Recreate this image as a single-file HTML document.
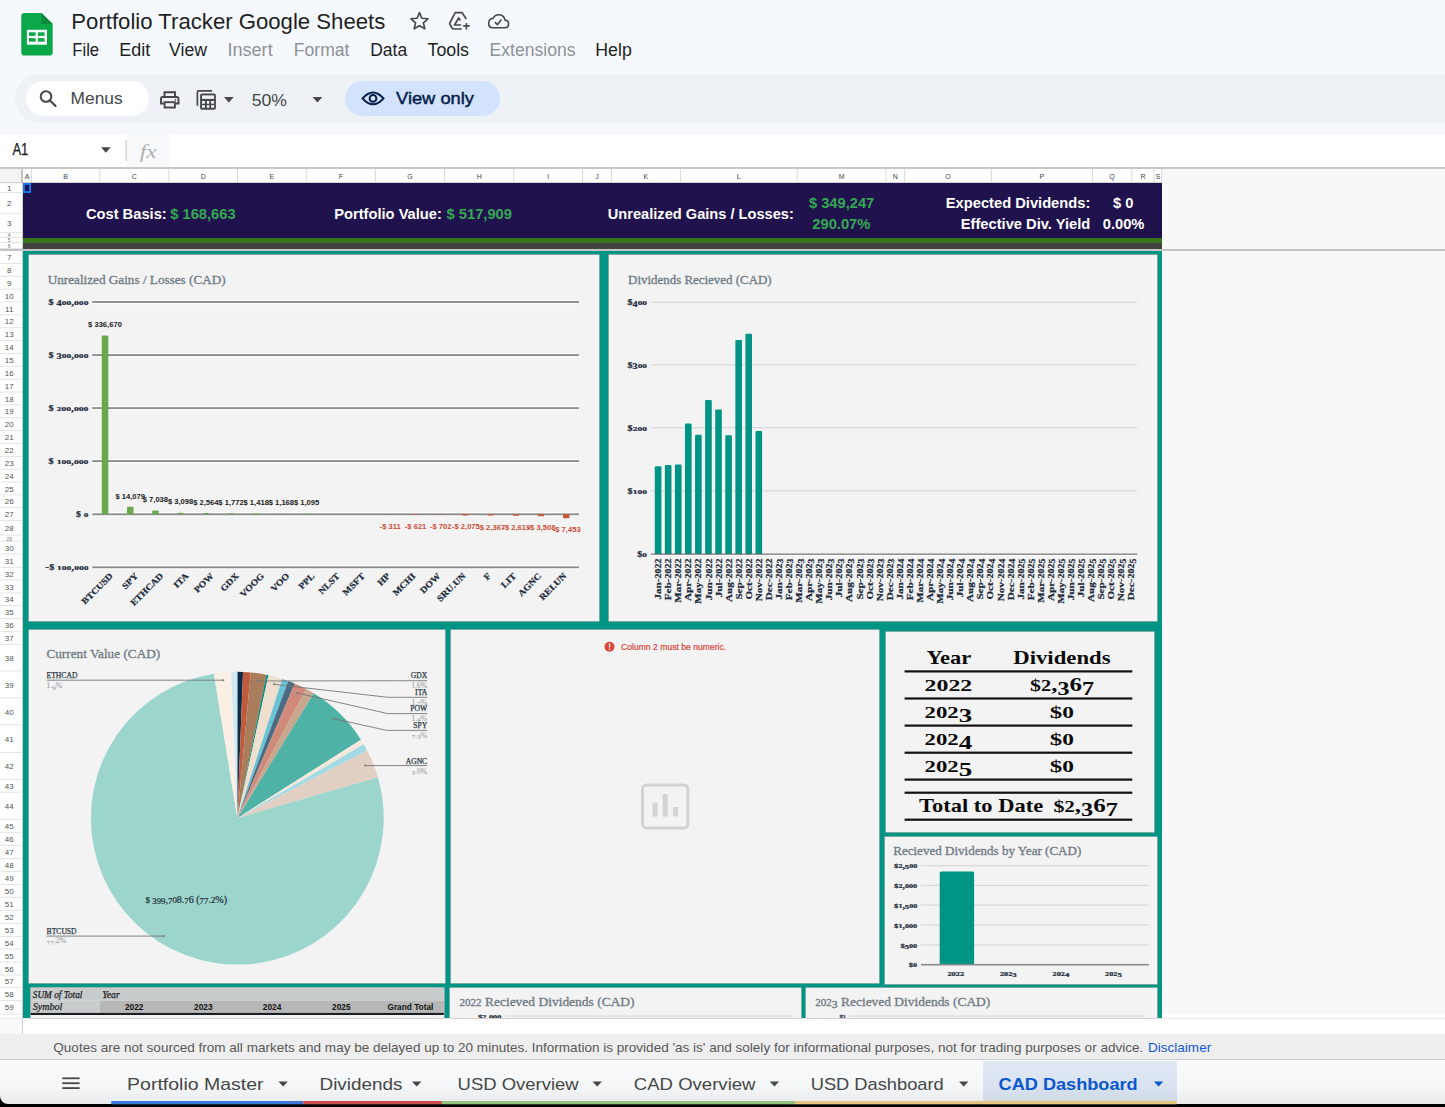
<!DOCTYPE html>
<html><head><meta charset="utf-8"><title>Portfolio Tracker Google Sheets</title>
<style>
html,body{margin:0;padding:0;}
body{width:1445px;height:1107px;overflow:hidden;position:relative;background:#f5f9fd;font-family:"Liberation Sans",sans-serif;}
.abs{position:absolute;}
svg{position:absolute;left:0;top:0;overflow:visible;}
</style></head><body>

<div class="abs" style="left:0;top:0;width:1445px;height:135px;background:#f5f9fd"></div>
<div class="abs" style="left:15px;top:73.5px;width:1500px;height:49.5px;background:#eef2f7;border-radius:25px"></div>
<div class="abs" style="left:25.6px;top:81px;width:123px;height:35px;background:#fff;border-radius:18px"></div>
<div class="abs" style="left:344.7px;top:81px;width:155.3px;height:35px;background:#d3e3fd;border-radius:18px"></div>
<div class="abs" style="left:0;top:135px;width:1445px;height:32.5px;background:#fff"></div>
<div class="abs" style="left:126.6px;top:135px;width:42.3px;height:32.3px;background:#f8f9fa"></div>
<div class="abs" style="left:0;top:167.3px;width:1445px;height:1.8px;background:#c7c7c7"></div>
<svg width="1445" height="170"><path d="M24.5 13 H41.5 L52.7 24 V52.5 Q52.7 55.6 49.6 55.6 H24.5 Q21.3 55.6 21.3 52.5 V16.2 Q21.3 13 24.5 13 Z" fill="#0ba84a"/><path d="M41.5 13 L52.7 24 H41.5 Z" fill="#0a8a3a"/><rect x="26.9" y="29.8" width="20.1" height="14.9" fill="#fff"/><rect x="29" y="32.3" width="6.6" height="3.6" fill="#0ba84a"/><rect x="37.8" y="32.3" width="6.8" height="3.6" fill="#0ba84a"/><rect x="29" y="38.1" width="6.6" height="3.6" fill="#0ba84a"/><rect x="37.8" y="38.1" width="6.8" height="3.6" fill="#0ba84a"/><text x="71.3" y="29.3" font-family='"Liberation Sans", sans-serif' font-size="22" fill="#1f1f1f" font-weight="normal" font-style="normal" text-anchor="start" textLength="314" lengthAdjust="spacingAndGlyphs" >Portfolio Tracker Google Sheets</text><path d="M419.5 12.6 L421.9 18.3 L428 18.8 L423.4 22.8 L424.8 28.8 L419.5 25.6 L414.2 28.8 L415.6 22.8 L411 18.8 L417.1 18.3 Z" fill="none" stroke="#444746" stroke-width="1.6" stroke-linejoin="round"/><path d="M466.3 19.1 L461.9 12.6 H455.2 L449.9 22.8 Q449.5 23.6 449.9 24.4 L452.2 28.2 Q452.6 29 453.5 29 H461.7" fill="none" stroke="#444746" stroke-width="1.7" stroke-linejoin="round"/><path d="M461.2 25 H454.6 L458.7 17.9 L460.3 20.5" fill="none" stroke="#444746" stroke-width="1.7" stroke-linejoin="round"/><path d="M466.4 22.9 V29.4 M463.2 25.9 H469.7" stroke="#444746" stroke-width="1.6"/><path d="M492.5 27.7 H504.8 Q508.6 27.7 508.6 23.9 Q508.6 20.4 505.1 20.1 Q503.8 14.8 498.8 14.8 Q494.8 14.8 493.1 18.3 Q488.7 18.8 488.7 23.2 Q488.7 27.7 492.5 27.7 Z" fill="none" stroke="#444746" stroke-width="1.6"/><path d="M494.8 22.1 L497.5 24.5 L501.4 19.6" fill="none" stroke="#444746" stroke-width="1.6"/><text x="72.2" y="56" font-family='"Liberation Sans", sans-serif' font-size="17.5" fill="#1f1f1f" font-weight="normal" font-style="normal" text-anchor="start" textLength="27" lengthAdjust="spacingAndGlyphs" >File</text><text x="119.3" y="56" font-family='"Liberation Sans", sans-serif' font-size="17.5" fill="#1f1f1f" font-weight="normal" font-style="normal" text-anchor="start" textLength="31" lengthAdjust="spacingAndGlyphs" >Edit</text><text x="169" y="56" font-family='"Liberation Sans", sans-serif' font-size="17.5" fill="#1f1f1f" font-weight="normal" font-style="normal" text-anchor="start" textLength="38" lengthAdjust="spacingAndGlyphs" >View</text><text x="227.4" y="56" font-family='"Liberation Sans", sans-serif' font-size="17.5" fill="#8e9196" font-weight="normal" font-style="normal" text-anchor="start" textLength="45.3" lengthAdjust="spacingAndGlyphs" >Insert</text><text x="293.8" y="56" font-family='"Liberation Sans", sans-serif' font-size="17.5" fill="#8e9196" font-weight="normal" font-style="normal" text-anchor="start" textLength="55.7" lengthAdjust="spacingAndGlyphs" >Format</text><text x="370.2" y="56" font-family='"Liberation Sans", sans-serif' font-size="17.5" fill="#1f1f1f" font-weight="normal" font-style="normal" text-anchor="start" textLength="37" lengthAdjust="spacingAndGlyphs" >Data</text><text x="427.5" y="56" font-family='"Liberation Sans", sans-serif' font-size="17.5" fill="#1f1f1f" font-weight="normal" font-style="normal" text-anchor="start" textLength="41.5" lengthAdjust="spacingAndGlyphs" >Tools</text><text x="489.5" y="56" font-family='"Liberation Sans", sans-serif' font-size="17.5" fill="#8e9196" font-weight="normal" font-style="normal" text-anchor="start" textLength="86" lengthAdjust="spacingAndGlyphs" >Extensions</text><text x="595.3" y="56" font-family='"Liberation Sans", sans-serif' font-size="17.5" fill="#1f1f1f" font-weight="normal" font-style="normal" text-anchor="start" textLength="36.5" lengthAdjust="spacingAndGlyphs" >Help</text><circle cx="46" cy="96.5" r="5.3" fill="none" stroke="#444746" stroke-width="2"/><path d="M49.8 100.3 L55.5 106" stroke="#444746" stroke-width="2.2" stroke-linecap="round"/><text x="70.6" y="104.3" font-family='"Liberation Sans", sans-serif' font-size="17" fill="#444746" font-weight="normal" font-style="normal" text-anchor="start" textLength="52" lengthAdjust="spacingAndGlyphs" >Menus</text><path d="M164.5 96.8 V92.2 H175 V96.8" fill="none" stroke="#444746" stroke-width="1.9"/><path d="M163.8 103.5 H161 V98.7 Q161 97 162.7 97 H176.8 Q178.5 97 178.5 98.7 V103.5 H175.8" fill="none" stroke="#444746" stroke-width="1.9"/><rect x="164.6" y="102.2" width="10.3" height="5.3" fill="none" stroke="#444746" stroke-width="1.9"/><circle cx="175.4" cy="99.8" r="0.9" fill="#444746"/><path d="M197.4 105.7 V92 Q197.4 90.8 198.6 90.8 H212" fill="none" stroke="#444746" stroke-width="1.7"/><rect x="200.1" y="93.5" width="15.8" height="16.2" rx="2" fill="#444746"/><rect x="202" y="95.4" width="12.1" height="3.5" fill="#eef2f7"/><rect x="202" y="101" width="2.9" height="2.7" fill="#eef2f7"/><rect x="202" y="105.1" width="2.9" height="2.7" fill="#eef2f7"/><rect x="206.8" y="101" width="2.5" height="2.7" fill="#eef2f7"/><rect x="206.8" y="105.1" width="2.5" height="2.7" fill="#eef2f7"/><rect x="211.1" y="101" width="3.0" height="2.7" fill="#eef2f7"/><rect x="211.1" y="105.1" width="3.0" height="2.7" fill="#eef2f7"/><path d="M224 97 H233.7 L228.85 102.5 Z" fill="#444746"/><text x="251.7" y="105.7" font-family='"Liberation Sans", sans-serif' font-size="17" fill="#444746" font-weight="normal" font-style="normal" text-anchor="start" textLength="35.3" lengthAdjust="spacingAndGlyphs" >50%</text><path d="M312.6 97 H322.3 L317.45 102.5 Z" fill="#444746"/><path d="M362.5 98.4 Q373 86.5 383.5 98.4 Q373 110.3 362.5 98.4 Z" fill="none" stroke="#041e49" stroke-width="2"/><circle cx="373" cy="98.4" r="3.4" fill="none" stroke="#041e49" stroke-width="2"/><text x="396" y="103.9" font-family='"Liberation Sans", sans-serif' font-size="17" fill="#041e49" font-weight="normal" font-style="normal" text-anchor="start" textLength="78" lengthAdjust="spacingAndGlyphs" stroke="#041e49" stroke-width="0.45">View only</text><text x="12.4" y="155.2" font-family='"Liberation Sans", sans-serif' font-size="15.8" fill="#1f1f1f" font-weight="normal" font-style="normal" text-anchor="start" textLength="16" lengthAdjust="spacingAndGlyphs" stroke="#1f1f1f" stroke-width="0.25">A1</text><path d="M101 147.2 H110.7 L105.85 152.7 Z" fill="#444746"/><rect x="125.5" y="140" width="1.2" height="21" fill="#c7c7c7"/><text x="139.8" y="157.5" font-family='"Liberation Serif", serif' font-size="19" fill="#b0b0b0" font-weight="normal" font-style="italic" text-anchor="start" textLength="17" lengthAdjust="spacingAndGlyphs" >fx</text></svg>
<div class="abs" style="left:0;top:169px;width:1445px;height:865px;background:#f8f8f8"></div>
<div class="abs" style="left:0;top:169px;width:1161.8px;height:14px;background:#fff"></div>
<div class="abs" style="left:0;top:169px;width:22px;height:14px;background:#f1f3f4"></div>
<div class="abs" style="left:0;top:183px;width:22px;height:851px;background:#fff"></div>
<div class="abs" style="left:23px;top:1014px;width:1422px;height:20px;background:#fff"></div>
<div class="abs" style="left:0;top:1018.5px;width:22px;height:15px;background:#f8f9fa"></div>
<svg width="1445" height="1107"><rect x="30.8" y="169" width="1" height="14" fill="#d9d9d9"/><rect x="99.3" y="169" width="1" height="14" fill="#d9d9d9"/><rect x="168.3" y="169" width="1" height="14" fill="#d9d9d9"/><rect x="237.0" y="169" width="1" height="14" fill="#d9d9d9"/><rect x="305.7" y="169" width="1" height="14" fill="#d9d9d9"/><rect x="374.9" y="169" width="1" height="14" fill="#d9d9d9"/><rect x="444.1" y="169" width="1" height="14" fill="#d9d9d9"/><rect x="513.2" y="169" width="1" height="14" fill="#d9d9d9"/><rect x="582.2" y="169" width="1" height="14" fill="#d9d9d9"/><rect x="610.9" y="169" width="1" height="14" fill="#d9d9d9"/><rect x="679.9" y="169" width="1" height="14" fill="#d9d9d9"/><rect x="796.7" y="169" width="1" height="14" fill="#d9d9d9"/><rect x="885.5" y="169" width="1" height="14" fill="#d9d9d9"/><rect x="904.2" y="169" width="1" height="14" fill="#d9d9d9"/><rect x="990.9" y="169" width="1" height="14" fill="#d9d9d9"/><rect x="1091.9" y="169" width="1" height="14" fill="#d9d9d9"/><rect x="1131.3" y="169" width="1" height="14" fill="#d9d9d9"/><rect x="1153.7" y="169" width="1" height="14" fill="#d9d9d9"/><rect x="1161.3" y="169" width="1" height="14" fill="#d9d9d9"/><rect x="0" y="182.3" width="1161.8" height="0.8" fill="#c0c0c0"/><text x="27.1" y="179.3" font-family='"Liberation Sans", sans-serif' font-size="7" fill="#444" font-weight="normal" font-style="normal" text-anchor="middle" >A</text><text x="65.5" y="179.3" font-family='"Liberation Sans", sans-serif' font-size="7" fill="#444" font-weight="normal" font-style="normal" text-anchor="middle" >B</text><text x="134.3" y="179.3" font-family='"Liberation Sans", sans-serif' font-size="7" fill="#444" font-weight="normal" font-style="normal" text-anchor="middle" >C</text><text x="203.2" y="179.3" font-family='"Liberation Sans", sans-serif' font-size="7" fill="#444" font-weight="normal" font-style="normal" text-anchor="middle" >D</text><text x="271.9" y="179.3" font-family='"Liberation Sans", sans-serif' font-size="7" fill="#444" font-weight="normal" font-style="normal" text-anchor="middle" >E</text><text x="340.8" y="179.3" font-family='"Liberation Sans", sans-serif' font-size="7" fill="#444" font-weight="normal" font-style="normal" text-anchor="middle" >F</text><text x="410.0" y="179.3" font-family='"Liberation Sans", sans-serif' font-size="7" fill="#444" font-weight="normal" font-style="normal" text-anchor="middle" >G</text><text x="479.2" y="179.3" font-family='"Liberation Sans", sans-serif' font-size="7" fill="#444" font-weight="normal" font-style="normal" text-anchor="middle" >H</text><text x="548.2" y="179.3" font-family='"Liberation Sans", sans-serif' font-size="7" fill="#444" font-weight="normal" font-style="normal" text-anchor="middle" >I</text><text x="597.0" y="179.3" font-family='"Liberation Sans", sans-serif' font-size="7" fill="#444" font-weight="normal" font-style="normal" text-anchor="middle" >J</text><text x="645.9" y="179.3" font-family='"Liberation Sans", sans-serif' font-size="7" fill="#444" font-weight="normal" font-style="normal" text-anchor="middle" >K</text><text x="738.8" y="179.3" font-family='"Liberation Sans", sans-serif' font-size="7" fill="#444" font-weight="normal" font-style="normal" text-anchor="middle" >L</text><text x="841.6" y="179.3" font-family='"Liberation Sans", sans-serif' font-size="7" fill="#444" font-weight="normal" font-style="normal" text-anchor="middle" >M</text><text x="895.4" y="179.3" font-family='"Liberation Sans", sans-serif' font-size="7" fill="#444" font-weight="normal" font-style="normal" text-anchor="middle" >N</text><text x="948.0" y="179.3" font-family='"Liberation Sans", sans-serif' font-size="7" fill="#444" font-weight="normal" font-style="normal" text-anchor="middle" >O</text><text x="1041.9" y="179.3" font-family='"Liberation Sans", sans-serif' font-size="7" fill="#444" font-weight="normal" font-style="normal" text-anchor="middle" >P</text><text x="1112.1" y="179.3" font-family='"Liberation Sans", sans-serif' font-size="7" fill="#444" font-weight="normal" font-style="normal" text-anchor="middle" >Q</text><text x="1143.0" y="179.3" font-family='"Liberation Sans", sans-serif' font-size="7" fill="#444" font-weight="normal" font-style="normal" text-anchor="middle" >R</text><text x="1158.0" y="179.3" font-family='"Liberation Sans", sans-serif' font-size="7" fill="#444" font-weight="normal" font-style="normal" text-anchor="middle" >S</text><rect x="21.2" y="169" width="1.8" height="14" fill="#bdbdbd"/><rect x="0" y="192.0" width="22" height="0.9" fill="#e0e0e0"/><text x="9.2" y="190.8" font-family='"Liberation Sans", sans-serif' font-size="8" fill="#555" font-weight="normal" font-style="normal" text-anchor="middle" >1</text><rect x="0" y="212.8" width="22" height="0.9" fill="#e0e0e0"/><text x="9.2" y="205.9" font-family='"Liberation Sans", sans-serif' font-size="8" fill="#555" font-weight="normal" font-style="normal" text-anchor="middle" >2</text><rect x="0" y="232.2" width="22" height="0.9" fill="#e0e0e0"/><text x="9.2" y="226.0" font-family='"Liberation Sans", sans-serif' font-size="8" fill="#555" font-weight="normal" font-style="normal" text-anchor="middle" >3</text><rect x="0" y="236.8" width="22" height="0.9" fill="#e0e0e0"/><text x="9.2" y="236.8" font-family='"Liberation Sans", sans-serif' font-size="5" fill="#777" font-weight="normal" font-style="normal" text-anchor="middle" >4</text><rect x="0" y="242.0" width="22" height="0.9" fill="#e0e0e0"/><text x="9.2" y="242.0" font-family='"Liberation Sans", sans-serif' font-size="5" fill="#777" font-weight="normal" font-style="normal" text-anchor="middle" >5</text><rect x="0" y="248.1" width="22" height="0.9" fill="#e0e0e0"/><text x="9.2" y="248.1" font-family='"Liberation Sans", sans-serif' font-size="5" fill="#777" font-weight="normal" font-style="normal" text-anchor="middle" >6</text><rect x="0" y="262.96" width="22" height="0.9" fill="#e0e0e0"/><text x="9.2" y="260.0" font-family='"Liberation Sans", sans-serif' font-size="8" fill="#555" font-weight="normal" font-style="normal" text-anchor="middle" >7</text><rect x="0" y="275.82" width="22" height="0.9" fill="#e0e0e0"/><text x="9.2" y="272.9" font-family='"Liberation Sans", sans-serif' font-size="8" fill="#555" font-weight="normal" font-style="normal" text-anchor="middle" >8</text><rect x="0" y="288.68" width="22" height="0.9" fill="#e0e0e0"/><text x="9.2" y="285.8" font-family='"Liberation Sans", sans-serif' font-size="8" fill="#555" font-weight="normal" font-style="normal" text-anchor="middle" >9</text><rect x="0" y="301.54" width="22" height="0.9" fill="#e0e0e0"/><text x="9.2" y="298.6" font-family='"Liberation Sans", sans-serif' font-size="8" fill="#555" font-weight="normal" font-style="normal" text-anchor="middle" >10</text><rect x="0" y="314.40000000000003" width="22" height="0.9" fill="#e0e0e0"/><text x="9.2" y="311.5" font-family='"Liberation Sans", sans-serif' font-size="8" fill="#555" font-weight="normal" font-style="normal" text-anchor="middle" >11</text><rect x="0" y="327.26000000000005" width="22" height="0.9" fill="#e0e0e0"/><text x="9.2" y="324.3" font-family='"Liberation Sans", sans-serif' font-size="8" fill="#555" font-weight="normal" font-style="normal" text-anchor="middle" >12</text><rect x="0" y="340.12000000000006" width="22" height="0.9" fill="#e0e0e0"/><text x="9.2" y="337.2" font-family='"Liberation Sans", sans-serif' font-size="8" fill="#555" font-weight="normal" font-style="normal" text-anchor="middle" >13</text><rect x="0" y="352.9800000000001" width="22" height="0.9" fill="#e0e0e0"/><text x="9.2" y="350.1" font-family='"Liberation Sans", sans-serif' font-size="8" fill="#555" font-weight="normal" font-style="normal" text-anchor="middle" >14</text><rect x="0" y="365.8400000000001" width="22" height="0.9" fill="#e0e0e0"/><text x="9.2" y="362.9" font-family='"Liberation Sans", sans-serif' font-size="8" fill="#555" font-weight="normal" font-style="normal" text-anchor="middle" >15</text><rect x="0" y="378.7000000000001" width="22" height="0.9" fill="#e0e0e0"/><text x="9.2" y="375.8" font-family='"Liberation Sans", sans-serif' font-size="8" fill="#555" font-weight="normal" font-style="normal" text-anchor="middle" >16</text><rect x="0" y="391.5600000000001" width="22" height="0.9" fill="#e0e0e0"/><text x="9.2" y="388.6" font-family='"Liberation Sans", sans-serif' font-size="8" fill="#555" font-weight="normal" font-style="normal" text-anchor="middle" >17</text><rect x="0" y="404.42000000000013" width="22" height="0.9" fill="#e0e0e0"/><text x="9.2" y="401.5" font-family='"Liberation Sans", sans-serif' font-size="8" fill="#555" font-weight="normal" font-style="normal" text-anchor="middle" >18</text><rect x="0" y="417.28000000000014" width="22" height="0.9" fill="#e0e0e0"/><text x="9.2" y="414.4" font-family='"Liberation Sans", sans-serif' font-size="8" fill="#555" font-weight="normal" font-style="normal" text-anchor="middle" >19</text><rect x="0" y="430.14000000000016" width="22" height="0.9" fill="#e0e0e0"/><text x="9.2" y="427.2" font-family='"Liberation Sans", sans-serif' font-size="8" fill="#555" font-weight="normal" font-style="normal" text-anchor="middle" >20</text><rect x="0" y="443.00000000000017" width="22" height="0.9" fill="#e0e0e0"/><text x="9.2" y="440.1" font-family='"Liberation Sans", sans-serif' font-size="8" fill="#555" font-weight="normal" font-style="normal" text-anchor="middle" >21</text><rect x="0" y="455.8600000000002" width="22" height="0.9" fill="#e0e0e0"/><text x="9.2" y="452.9" font-family='"Liberation Sans", sans-serif' font-size="8" fill="#555" font-weight="normal" font-style="normal" text-anchor="middle" >22</text><rect x="0" y="468.7200000000002" width="22" height="0.9" fill="#e0e0e0"/><text x="9.2" y="465.8" font-family='"Liberation Sans", sans-serif' font-size="8" fill="#555" font-weight="normal" font-style="normal" text-anchor="middle" >23</text><rect x="0" y="481.5800000000002" width="22" height="0.9" fill="#e0e0e0"/><text x="9.2" y="478.7" font-family='"Liberation Sans", sans-serif' font-size="8" fill="#555" font-weight="normal" font-style="normal" text-anchor="middle" >24</text><rect x="0" y="494.4400000000002" width="22" height="0.9" fill="#e0e0e0"/><text x="9.2" y="491.5" font-family='"Liberation Sans", sans-serif' font-size="8" fill="#555" font-weight="normal" font-style="normal" text-anchor="middle" >25</text><rect x="0" y="507.30000000000024" width="22" height="0.9" fill="#e0e0e0"/><text x="9.2" y="504.4" font-family='"Liberation Sans", sans-serif' font-size="8" fill="#555" font-weight="normal" font-style="normal" text-anchor="middle" >26</text><rect x="0" y="520.1600000000002" width="22" height="0.9" fill="#e0e0e0"/><text x="9.2" y="517.2" font-family='"Liberation Sans", sans-serif' font-size="8" fill="#555" font-weight="normal" font-style="normal" text-anchor="middle" >27</text><rect x="0" y="534.6" width="22" height="0.9" fill="#e0e0e0"/><text x="9.2" y="530.9" font-family='"Liberation Sans", sans-serif' font-size="8" fill="#555" font-weight="normal" font-style="normal" text-anchor="middle" >28</text><rect x="0" y="540.7" width="22" height="0.9" fill="#e0e0e0"/><text x="9.2" y="540.7" font-family='"Liberation Sans", sans-serif' font-size="5" fill="#777" font-weight="normal" font-style="normal" text-anchor="middle" >29</text><rect x="0" y="553.6" width="22" height="0.9" fill="#e0e0e0"/><text x="9.2" y="550.7" font-family='"Liberation Sans", sans-serif' font-size="8" fill="#555" font-weight="normal" font-style="normal" text-anchor="middle" >30</text><rect x="0" y="566.8" width="22" height="0.9" fill="#e0e0e0"/><text x="9.2" y="563.7" font-family='"Liberation Sans", sans-serif' font-size="8" fill="#555" font-weight="normal" font-style="normal" text-anchor="middle" >31</text><rect x="0" y="579.5" width="22" height="0.9" fill="#e0e0e0"/><text x="9.2" y="576.6" font-family='"Liberation Sans", sans-serif' font-size="8" fill="#555" font-weight="normal" font-style="normal" text-anchor="middle" >32</text><rect x="0" y="592.5" width="22" height="0.9" fill="#e0e0e0"/><text x="9.2" y="589.5" font-family='"Liberation Sans", sans-serif' font-size="8" fill="#555" font-weight="normal" font-style="normal" text-anchor="middle" >33</text><rect x="0" y="605.2" width="22" height="0.9" fill="#e0e0e0"/><text x="9.2" y="602.4" font-family='"Liberation Sans", sans-serif' font-size="8" fill="#555" font-weight="normal" font-style="normal" text-anchor="middle" >34</text><rect x="0" y="618.1" width="22" height="0.9" fill="#e0e0e0"/><text x="9.2" y="615.2" font-family='"Liberation Sans", sans-serif' font-size="8" fill="#555" font-weight="normal" font-style="normal" text-anchor="middle" >35</text><rect x="0" y="631.3" width="22" height="0.9" fill="#e0e0e0"/><text x="9.2" y="628.2" font-family='"Liberation Sans", sans-serif' font-size="8" fill="#555" font-weight="normal" font-style="normal" text-anchor="middle" >36</text><rect x="0" y="643.9" width="22" height="0.9" fill="#e0e0e0"/><text x="9.2" y="641.1" font-family='"Liberation Sans", sans-serif' font-size="8" fill="#555" font-weight="normal" font-style="normal" text-anchor="middle" >37</text><rect x="0" y="670.5" width="22" height="0.9" fill="#e0e0e0"/><text x="9.2" y="660.7" font-family='"Liberation Sans", sans-serif' font-size="8" fill="#555" font-weight="normal" font-style="normal" text-anchor="middle" >38</text><rect x="0" y="697.5" width="22" height="0.9" fill="#e0e0e0"/><text x="9.2" y="687.5" font-family='"Liberation Sans", sans-serif' font-size="8" fill="#555" font-weight="normal" font-style="normal" text-anchor="middle" >39</text><rect x="0" y="724.4" width="22" height="0.9" fill="#e0e0e0"/><text x="9.2" y="714.5" font-family='"Liberation Sans", sans-serif' font-size="8" fill="#555" font-weight="normal" font-style="normal" text-anchor="middle" >40</text><rect x="0" y="751.9" width="22" height="0.9" fill="#e0e0e0"/><text x="9.2" y="741.6" font-family='"Liberation Sans", sans-serif' font-size="8" fill="#555" font-weight="normal" font-style="normal" text-anchor="middle" >41</text><rect x="0" y="778.9" width="22" height="0.9" fill="#e0e0e0"/><text x="9.2" y="768.9" font-family='"Liberation Sans", sans-serif' font-size="8" fill="#555" font-weight="normal" font-style="normal" text-anchor="middle" >42</text><rect x="0" y="791.7" width="22" height="0.9" fill="#e0e0e0"/><text x="9.2" y="788.8" font-family='"Liberation Sans", sans-serif' font-size="8" fill="#555" font-weight="normal" font-style="normal" text-anchor="middle" >43</text><rect x="0" y="818.8" width="22" height="0.9" fill="#e0e0e0"/><text x="9.2" y="808.8" font-family='"Liberation Sans", sans-serif' font-size="8" fill="#555" font-weight="normal" font-style="normal" text-anchor="middle" >44</text><rect x="0" y="831.8" width="22" height="0.9" fill="#e0e0e0"/><text x="9.2" y="828.8" font-family='"Liberation Sans", sans-serif' font-size="8" fill="#555" font-weight="normal" font-style="normal" text-anchor="middle" >45</text><rect x="0" y="844.8" width="22" height="0.9" fill="#e0e0e0"/><text x="9.2" y="841.8" font-family='"Liberation Sans", sans-serif' font-size="8" fill="#555" font-weight="normal" font-style="normal" text-anchor="middle" >46</text><rect x="0" y="858.0" width="22" height="0.9" fill="#e0e0e0"/><text x="9.2" y="854.9" font-family='"Liberation Sans", sans-serif' font-size="8" fill="#555" font-weight="normal" font-style="normal" text-anchor="middle" >47</text><rect x="0" y="870.9" width="22" height="0.9" fill="#e0e0e0"/><text x="9.2" y="868.0" font-family='"Liberation Sans", sans-serif' font-size="8" fill="#555" font-weight="normal" font-style="normal" text-anchor="middle" >48</text><rect x="0" y="883.9" width="22" height="0.9" fill="#e0e0e0"/><text x="9.2" y="880.9" font-family='"Liberation Sans", sans-serif' font-size="8" fill="#555" font-weight="normal" font-style="normal" text-anchor="middle" >49</text><rect x="0" y="896.9" width="22" height="0.9" fill="#e0e0e0"/><text x="9.2" y="893.9" font-family='"Liberation Sans", sans-serif' font-size="8" fill="#555" font-weight="normal" font-style="normal" text-anchor="middle" >50</text><rect x="0" y="909.9" width="22" height="0.9" fill="#e0e0e0"/><text x="9.2" y="906.9" font-family='"Liberation Sans", sans-serif' font-size="8" fill="#555" font-weight="normal" font-style="normal" text-anchor="middle" >51</text><rect x="0" y="922.9" width="22" height="0.9" fill="#e0e0e0"/><text x="9.2" y="919.9" font-family='"Liberation Sans", sans-serif' font-size="8" fill="#555" font-weight="normal" font-style="normal" text-anchor="middle" >52</text><rect x="0" y="935.9" width="22" height="0.9" fill="#e0e0e0"/><text x="9.2" y="932.9" font-family='"Liberation Sans", sans-serif' font-size="8" fill="#555" font-weight="normal" font-style="normal" text-anchor="middle" >53</text><rect x="0" y="948.6" width="22" height="0.9" fill="#e0e0e0"/><text x="9.2" y="945.8" font-family='"Liberation Sans", sans-serif' font-size="8" fill="#555" font-weight="normal" font-style="normal" text-anchor="middle" >54</text><rect x="0" y="961.6" width="22" height="0.9" fill="#e0e0e0"/><text x="9.2" y="958.6" font-family='"Liberation Sans", sans-serif' font-size="8" fill="#555" font-weight="normal" font-style="normal" text-anchor="middle" >55</text><rect x="0" y="974.6" width="22" height="0.9" fill="#e0e0e0"/><text x="9.2" y="971.6" font-family='"Liberation Sans", sans-serif' font-size="8" fill="#555" font-weight="normal" font-style="normal" text-anchor="middle" >56</text><rect x="0" y="987.1" width="22" height="0.9" fill="#e0e0e0"/><text x="9.2" y="984.4" font-family='"Liberation Sans", sans-serif' font-size="8" fill="#555" font-weight="normal" font-style="normal" text-anchor="middle" >57</text><rect x="0" y="1000.2" width="22" height="0.9" fill="#e0e0e0"/><text x="9.2" y="997.2" font-family='"Liberation Sans", sans-serif' font-size="8" fill="#555" font-weight="normal" font-style="normal" text-anchor="middle" >58</text><rect x="0" y="1013.6" width="22" height="0.9" fill="#e0e0e0"/><text x="9.2" y="1010.4" font-family='"Liberation Sans", sans-serif' font-size="8" fill="#555" font-weight="normal" font-style="normal" text-anchor="middle" >59</text><rect x="22" y="183" width="1" height="851" fill="#d0d0d0"/><rect x="0" y="1017.8" width="1445" height="0.8" fill="#e0e0e0"/></svg>
<div class="abs" style="left:23px;top:183px;width:1138.8px;height:54.5px;background:#20124d"></div>
<div class="abs" style="left:23px;top:237.5px;width:1138.8px;height:5px;background:#38761d"></div>
<div class="abs" style="left:23px;top:242.5px;width:1138.8px;height:6.1px;background:#434343"></div>
<div class="abs" style="left:0;top:248.6px;width:1445px;height:2px;background:#c4c4c4"></div>
<div class="abs" style="left:23px;top:183px;width:8.3px;height:9.8px;box-sizing:border-box;border:2px solid #1a73e8"></div>
<svg width="1445" height="1107"><text x="85.9" y="218.7" font-family='"Liberation Sans", sans-serif' font-size="14.7" fill="#fff" font-weight="bold" font-style="normal" text-anchor="start" >Cost Basis: </text><text x="235.6" y="218.7" font-family='"Liberation Sans", sans-serif' font-size="14.7" fill="#34a853" font-weight="bold" font-style="normal" text-anchor="end" >$ 168,663</text><text x="334.2" y="218.7" font-family='"Liberation Sans", sans-serif' font-size="14.7" fill="#fff" font-weight="bold" font-style="normal" text-anchor="start" >Portfolio Value: </text><text x="511.9" y="218.7" font-family='"Liberation Sans", sans-serif' font-size="14.7" fill="#34a853" font-weight="bold" font-style="normal" text-anchor="end" >$ 517,909</text><text x="607.8" y="219.1" font-family='"Liberation Sans", sans-serif' font-size="14.7" fill="#fff" font-weight="bold" font-style="normal" text-anchor="start" textLength="186" lengthAdjust="spacingAndGlyphs" >Unrealized Gains / Losses:</text><text x="841.6" y="208.3" font-family='"Liberation Sans", sans-serif' font-size="14.7" fill="#34a853" font-weight="bold" font-style="normal" text-anchor="middle" >$ 349,247</text><text x="841.3" y="228.8" font-family='"Liberation Sans", sans-serif' font-size="14.7" fill="#34a853" font-weight="bold" font-style="normal" text-anchor="middle" >290.07%</text><text x="1090.3" y="208.3" font-family='"Liberation Sans", sans-serif' font-size="14.7" fill="#fff" font-weight="bold" font-style="normal" text-anchor="end" >Expected Dividends:</text><text x="1090.3" y="228.8" font-family='"Liberation Sans", sans-serif' font-size="14.7" fill="#fff" font-weight="bold" font-style="normal" text-anchor="end" >Effective Div. Yield</text><text x="1123.3" y="208.3" font-family='"Liberation Sans", sans-serif' font-size="14.7" fill="#fff" font-weight="bold" font-style="normal" text-anchor="middle" >$ 0</text><text x="1123.6" y="228.8" font-family='"Liberation Sans", sans-serif' font-size="14.7" fill="#fff" font-weight="bold" font-style="normal" text-anchor="middle" >0.00%</text></svg>
<div class="abs" style="left:23px;top:250.6px;width:1138.8px;height:767.4px;background:#009485"></div>
<div class="abs" style="left:28.5px;top:254.5px;width:570.0px;height:366.9px;background:#f3f3f3;box-shadow:0 0 0 0.6px #c9bcbc"></div>
<div class="abs" style="left:608.5px;top:254.5px;width:548.5px;height:366.9px;background:#f3f3f3;box-shadow:0 0 0 0.6px #c9bcbc"></div>
<div class="abs" style="left:28.5px;top:629.7px;width:416.5px;height:353.3px;background:#f3f3f3;box-shadow:0 0 0 0.6px #c9bcbc"></div>
<div class="abs" style="left:451.3px;top:629.7px;width:428.0px;height:353.3px;background:#f3f3f3;box-shadow:0 0 0 0.6px #c9bcbc"></div>
<div class="abs" style="left:885.6px;top:632.1px;width:268.8px;height:199.9px;background:#f3f3f3;box-shadow:0 0 0 0.6px #c9bcbc"></div>
<div class="abs" style="left:885px;top:837.2px;width:272.3px;height:146.8px;background:#f3f3f3;box-shadow:0 0 0 0.6px #c9bcbc"></div>
<div class="abs" style="left:30.7px;top:987.6px;width:413.2px;height:30.4px;background:#f3f3f3;box-shadow:0 0 0 0.6px #c9bcbc"></div>
<div class="abs" style="left:450.2px;top:988px;width:350.5px;height:30.0px;background:#f3f3f3;box-shadow:0 0 0 0.6px #c9bcbc"></div>
<div class="abs" style="left:805.5px;top:988px;width:351.8px;height:30.0px;background:#f3f3f3;box-shadow:0 0 0 0.6px #c9bcbc"></div>
<div class="abs" style="left:0;top:0;width:1445px;height:1018px;overflow:hidden"><svg width="1445" height="1107"><text x="47.7" y="284" font-family='"Liberation Serif", serif' font-size="12.9" fill="#6f7a84" font-weight="normal" font-style="normal" text-anchor="start" textLength="178" lengthAdjust="spacingAndGlyphs" stroke="#6f7a84" stroke-width="0.3">Unrealized Gains / Losses (CAD)</text><rect x="92.2" y="299.85" width="486.8" height="4.3" fill="#ffffff"/><rect x="92.2" y="301.05" width="486.8" height="1.9" fill="#8c8c8c"/><text x="88.4" y="305" font-family='"Liberation Serif", serif' font-size="8.5" fill="#1c2a3a" font-weight="bold" font-style="normal" text-anchor="end" textLength="39.8" lengthAdjust="spacingAndGlyphs" stroke="#1c2a3a" stroke-width="0.22"><tspan font-size="7.48">$</tspan> <tspan font-size="7.48" dy="1.36">4</tspan><tspan font-size="6.97" dy="-1.36">0</tspan><tspan font-size="6.97">0</tspan>,<tspan font-size="6.97">0</tspan><tspan font-size="6.97">0</tspan><tspan font-size="6.97">0</tspan></text><rect x="92.2" y="352.95000000000005" width="486.8" height="4.3" fill="#ffffff"/><rect x="92.2" y="354.15000000000003" width="486.8" height="1.9" fill="#8c8c8c"/><text x="88.4" y="358.1" font-family='"Liberation Serif", serif' font-size="8.5" fill="#1c2a3a" font-weight="bold" font-style="normal" text-anchor="end" textLength="39.8" lengthAdjust="spacingAndGlyphs" stroke="#1c2a3a" stroke-width="0.22"><tspan font-size="7.48">$</tspan> <tspan font-size="7.48" dy="1.36">3</tspan><tspan font-size="6.97" dy="-1.36">0</tspan><tspan font-size="6.97">0</tspan>,<tspan font-size="6.97">0</tspan><tspan font-size="6.97">0</tspan><tspan font-size="6.97">0</tspan></text><rect x="92.2" y="405.95000000000005" width="486.8" height="4.3" fill="#ffffff"/><rect x="92.2" y="407.15000000000003" width="486.8" height="1.9" fill="#8c8c8c"/><text x="88.4" y="411.1" font-family='"Liberation Serif", serif' font-size="8.5" fill="#1c2a3a" font-weight="bold" font-style="normal" text-anchor="end" textLength="39.8" lengthAdjust="spacingAndGlyphs" stroke="#1c2a3a" stroke-width="0.22"><tspan font-size="7.48">$</tspan> <tspan font-size="6.97">2</tspan><tspan font-size="6.97">0</tspan><tspan font-size="6.97">0</tspan>,<tspan font-size="6.97">0</tspan><tspan font-size="6.97">0</tspan><tspan font-size="6.97">0</tspan></text><rect x="92.2" y="458.95000000000005" width="486.8" height="4.3" fill="#ffffff"/><rect x="92.2" y="460.15000000000003" width="486.8" height="1.9" fill="#8c8c8c"/><text x="88.4" y="464.1" font-family='"Liberation Serif", serif' font-size="8.5" fill="#1c2a3a" font-weight="bold" font-style="normal" text-anchor="end" textLength="39.8" lengthAdjust="spacingAndGlyphs" stroke="#1c2a3a" stroke-width="0.22"><tspan font-size="7.48">$</tspan> <tspan font-size="6.97">1</tspan><tspan font-size="6.97">0</tspan><tspan font-size="6.97">0</tspan>,<tspan font-size="6.97">0</tspan><tspan font-size="6.97">0</tspan><tspan font-size="6.97">0</tspan></text><rect x="92.2" y="512.1499999999999" width="486.8" height="4.3" fill="#ffffff"/><rect x="92.2" y="513.3499999999999" width="486.8" height="1.9" fill="#8c8c8c"/><text x="88.4" y="517.3" font-family='"Liberation Serif", serif' font-size="8.5" fill="#1c2a3a" font-weight="bold" font-style="normal" text-anchor="end" textLength="12.4" lengthAdjust="spacingAndGlyphs" stroke="#1c2a3a" stroke-width="0.22"><tspan font-size="7.48">$</tspan> <tspan font-size="6.97">0</tspan></text><rect x="92.2" y="565.1499999999999" width="486.8" height="4.3" fill="#ffffff"/><rect x="92.2" y="566.3499999999999" width="486.8" height="1.9" fill="#8c8c8c"/><text x="88.4" y="570.3" font-family='"Liberation Serif", serif' font-size="8.5" fill="#1c2a3a" font-weight="bold" font-style="normal" text-anchor="end" textLength="43.1" lengthAdjust="spacingAndGlyphs" stroke="#1c2a3a" stroke-width="0.22">-<tspan font-size="7.48">$</tspan> <tspan font-size="6.97">1</tspan><tspan font-size="6.97">0</tspan><tspan font-size="6.97">0</tspan>,<tspan font-size="6.97">0</tspan><tspan font-size="6.97">0</tspan><tspan font-size="6.97">0</tspan></text><path d="M101.80 514.3 V336.53 Q101.80 335.53 102.80 335.53 H107.30 Q108.30 335.53 108.30 336.53 V514.3 Z" fill="#6aa84f"/><text x="105.0" y="327.2" font-family='"Liberation Sans", sans-serif' font-size="7.6" fill="#222" font-weight="bold" font-style="normal" text-anchor="middle" >$ 336,670</text><g transform="rotate(-45 113.4 576.5)"><text x="113.4" y="576.5" font-family='"Liberation Serif", serif' font-size="8.8" fill="#1c2a3a" font-weight="bold" font-style="normal" text-anchor="end" textLength="40.0" lengthAdjust="spacingAndGlyphs" stroke="#1c2a3a" stroke-width="0.22">BTCUSD</text></g><path d="M127.00 514.3 V507.82 Q127.00 506.82 128.00 506.82 H132.50 Q133.50 506.82 133.50 507.82 V514.3 Z" fill="#6aa84f"/><text x="130.2" y="498.5" font-family='"Liberation Sans", sans-serif' font-size="7.6" fill="#222" font-weight="bold" font-style="normal" text-anchor="middle" >$ 14,079</text><g transform="rotate(-45 138.6 576.5)"><text x="138.6" y="576.5" font-family='"Liberation Serif", serif' font-size="8.8" fill="#1c2a3a" font-weight="bold" font-style="normal" text-anchor="end" textLength="18.6" lengthAdjust="spacingAndGlyphs" stroke="#1c2a3a" stroke-width="0.22">SPY</text></g><path d="M152.20 514.3 V511.56 Q152.20 510.56 153.20 510.56 H157.70 Q158.70 510.56 158.70 511.56 V514.3 Z" fill="#6aa84f"/><text x="155.4" y="502.3" font-family='"Liberation Sans", sans-serif' font-size="7.6" fill="#222" font-weight="bold" font-style="normal" text-anchor="middle" >$ 7,038</text><g transform="rotate(-45 163.8 576.5)"><text x="163.8" y="576.5" font-family='"Liberation Serif", serif' font-size="8.8" fill="#1c2a3a" font-weight="bold" font-style="normal" text-anchor="end" textLength="42.2" lengthAdjust="spacingAndGlyphs" stroke="#1c2a3a" stroke-width="0.22">ETHCAD</text></g><path d="M177.40 514.3 V513.65 Q177.40 512.65 178.40 512.65 H182.90 Q183.90 512.65 183.90 513.65 V514.3 Z" fill="#6aa84f"/><text x="180.6" y="504.4" font-family='"Liberation Sans", sans-serif' font-size="7.6" fill="#222" font-weight="bold" font-style="normal" text-anchor="middle" >$ 3,098</text><g transform="rotate(-45 189.0 576.5)"><text x="189.0" y="576.5" font-family='"Liberation Serif", serif' font-size="8.8" fill="#1c2a3a" font-weight="bold" font-style="normal" text-anchor="end" textLength="16.8" lengthAdjust="spacingAndGlyphs" stroke="#1c2a3a" stroke-width="0.22">ITA</text></g><path d="M202.60 514.3 V513.94 Q202.60 512.94 203.60 512.94 H208.10 Q209.10 512.94 209.10 513.94 V514.3 Z" fill="#6aa84f"/><text x="205.8" y="504.6" font-family='"Liberation Sans", sans-serif' font-size="7.6" fill="#222" font-weight="bold" font-style="normal" text-anchor="middle" >$ 2,564</text><g transform="rotate(-45 214.2 576.5)"><text x="214.2" y="576.5" font-family='"Liberation Serif", serif' font-size="8.8" fill="#1c2a3a" font-weight="bold" font-style="normal" text-anchor="end" textLength="23.5" lengthAdjust="spacingAndGlyphs" stroke="#1c2a3a" stroke-width="0.22">POW</text></g><path d="M227.80 514.3 V514.36 Q227.80 513.36 228.80 513.36 H233.30 Q234.30 513.36 234.30 514.36 V514.3 Z" fill="#6aa84f"/><text x="231.0" y="505.1" font-family='"Liberation Sans", sans-serif' font-size="7.6" fill="#222" font-weight="bold" font-style="normal" text-anchor="middle" >$ 1,772</text><g transform="rotate(-45 239.4 576.5)"><text x="239.4" y="576.5" font-family='"Liberation Serif", serif' font-size="8.8" fill="#1c2a3a" font-weight="bold" font-style="normal" text-anchor="end" textLength="21.9" lengthAdjust="spacingAndGlyphs" stroke="#1c2a3a" stroke-width="0.22">GDX</text></g><path d="M253.00 514.3 V514.55 Q253.00 513.55 254.00 513.55 H258.50 Q259.50 513.55 259.50 514.55 V514.3 Z" fill="#6aa84f"/><text x="256.2" y="505.2" font-family='"Liberation Sans", sans-serif' font-size="7.6" fill="#222" font-weight="bold" font-style="normal" text-anchor="middle" >$ 1,418</text><g transform="rotate(-45 264.6 576.5)"><text x="264.6" y="576.5" font-family='"Liberation Serif", serif' font-size="8.8" fill="#1c2a3a" font-weight="bold" font-style="normal" text-anchor="end" textLength="29.9" lengthAdjust="spacingAndGlyphs" stroke="#1c2a3a" stroke-width="0.22">VOOG</text></g><path d="M278.20 514.3 V514.68 Q278.20 513.68 279.20 513.68 H283.70 Q284.70 513.68 284.70 514.68 V514.3 Z" fill="#6aa84f"/><text x="281.4" y="505.4" font-family='"Liberation Sans", sans-serif' font-size="7.6" fill="#222" font-weight="bold" font-style="normal" text-anchor="middle" >$ 1,168</text><g transform="rotate(-45 289.9 576.5)"><text x="289.9" y="576.5" font-family='"Liberation Serif", serif' font-size="8.8" fill="#1c2a3a" font-weight="bold" font-style="normal" text-anchor="end" textLength="22.3" lengthAdjust="spacingAndGlyphs" stroke="#1c2a3a" stroke-width="0.22">VOO</text></g><path d="M303.40 514.3 V514.72 Q303.40 513.72 304.40 513.72 H308.90 Q309.90 513.72 309.90 514.72 V514.3 Z" fill="#6aa84f"/><text x="306.6" y="505.4" font-family='"Liberation Sans", sans-serif' font-size="7.6" fill="#222" font-weight="bold" font-style="normal" text-anchor="middle" >$ 1,095</text><g transform="rotate(-45 315.1 576.5)"><text x="315.1" y="576.5" font-family='"Liberation Serif", serif' font-size="8.8" fill="#1c2a3a" font-weight="bold" font-style="normal" text-anchor="end" textLength="18.6" lengthAdjust="spacingAndGlyphs" stroke="#1c2a3a" stroke-width="0.22">PPL</text></g><path d="M328.60 514.3 V515.24 Q328.60 514.24 329.60 514.24 H334.10 Q335.10 514.24 335.10 515.24 V514.3 Z" fill="#6aa84f"/><g transform="rotate(-45 340.2 576.5)"><text x="340.2" y="576.5" font-family='"Liberation Serif", serif' font-size="8.8" fill="#1c2a3a" font-weight="bold" font-style="normal" text-anchor="end" textLength="25.7" lengthAdjust="spacingAndGlyphs" stroke="#1c2a3a" stroke-width="0.22">NLST</text></g><path d="M353.80 514.3 V515.27 Q353.80 514.27 354.80 514.27 H359.30 Q360.30 514.27 360.30 515.27 V514.3 Z" fill="#6aa84f"/><g transform="rotate(-45 365.5 576.5)"><text x="365.5" y="576.5" font-family='"Liberation Serif", serif' font-size="8.8" fill="#1c2a3a" font-weight="bold" font-style="normal" text-anchor="end" textLength="27.4" lengthAdjust="spacingAndGlyphs" stroke="#1c2a3a" stroke-width="0.22">MSFT</text></g><path d="M386.60 514.3 V513.47 Q386.60 514.47 387.60 514.47 H392.10 Q393.10 514.47 393.10 513.47 V514.3 Z" fill="#c9553c"/><text x="390.3" y="528.5" font-family='"Liberation Sans", sans-serif' font-size="7.6" fill="#cc4e35" font-weight="bold" font-style="normal" text-anchor="middle" >-$ 311</text><g transform="rotate(-45 390.6 576.5)"><text x="390.6" y="576.5" font-family='"Liberation Serif", serif' font-size="8.8" fill="#1c2a3a" font-weight="bold" font-style="normal" text-anchor="end" textLength="13.7" lengthAdjust="spacingAndGlyphs" stroke="#1c2a3a" stroke-width="0.22">HP</text></g><path d="M411.80 514.3 V513.63 Q411.80 514.63 412.80 514.63 H417.30 Q418.30 514.63 418.30 513.63 V514.3 Z" fill="#c9553c"/><text x="415.6" y="528.6" font-family='"Liberation Sans", sans-serif' font-size="7.6" fill="#cc4e35" font-weight="bold" font-style="normal" text-anchor="middle" >-$ 621</text><g transform="rotate(-45 415.9 576.5)"><text x="415.9" y="576.5" font-family='"Liberation Serif", serif' font-size="8.8" fill="#1c2a3a" font-weight="bold" font-style="normal" text-anchor="end" textLength="27.9" lengthAdjust="spacingAndGlyphs" stroke="#1c2a3a" stroke-width="0.22">MCHI</text></g><path d="M437.00 514.3 V513.67 Q437.00 514.67 438.00 514.67 H442.50 Q443.50 514.67 443.50 513.67 V514.3 Z" fill="#c9553c"/><text x="440.7" y="528.7" font-family='"Liberation Sans", sans-serif' font-size="7.6" fill="#cc4e35" font-weight="bold" font-style="normal" text-anchor="middle" >-$ 702</text><g transform="rotate(-45 441.0 576.5)"><text x="441.0" y="576.5" font-family='"Liberation Serif", serif' font-size="8.8" fill="#1c2a3a" font-weight="bold" font-style="normal" text-anchor="end" textLength="24.6" lengthAdjust="spacingAndGlyphs" stroke="#1c2a3a" stroke-width="0.22">DOW</text></g><path d="M462.20 514.3 V514.40 Q462.20 515.40 463.20 515.40 H467.70 Q468.70 515.40 468.70 514.40 V514.3 Z" fill="#c9553c"/><text x="465.9" y="529.4" font-family='"Liberation Sans", sans-serif' font-size="7.6" fill="#cc4e35" font-weight="bold" font-style="normal" text-anchor="middle" >-$ 2,075</text><g transform="rotate(-45 466.2 576.5)"><text x="466.2" y="576.5" font-family='"Liberation Serif", serif' font-size="8.8" fill="#1c2a3a" font-weight="bold" font-style="normal" text-anchor="end" textLength="36.4" lengthAdjust="spacingAndGlyphs" stroke="#1c2a3a" stroke-width="0.22">SRU.UN</text></g><path d="M487.40 514.3 V514.56 Q487.40 515.56 488.40 515.56 H492.90 Q493.90 515.56 493.90 514.56 V514.3 Z" fill="#c9553c"/><text x="491.2" y="529.6" font-family='"Liberation Sans", sans-serif' font-size="7.6" fill="#cc4e35" font-weight="bold" font-style="normal" text-anchor="middle" >-$ 2,367</text><g transform="rotate(-45 491.5 576.5)"><text x="491.5" y="576.5" font-family='"Liberation Serif", serif' font-size="8.8" fill="#1c2a3a" font-weight="bold" font-style="normal" text-anchor="end" textLength="6.0" lengthAdjust="spacingAndGlyphs" stroke="#1c2a3a" stroke-width="0.22">F</text></g><path d="M512.60 514.3 V514.69 Q512.60 515.69 513.60 515.69 H518.10 Q519.10 515.69 519.10 514.69 V514.3 Z" fill="#c9553c"/><text x="516.3" y="529.7" font-family='"Liberation Sans", sans-serif' font-size="7.6" fill="#cc4e35" font-weight="bold" font-style="normal" text-anchor="middle" >-$ 2,619</text><g transform="rotate(-45 516.6 576.5)"><text x="516.6" y="576.5" font-family='"Liberation Serif", serif' font-size="8.8" fill="#1c2a3a" font-weight="bold" font-style="normal" text-anchor="end" textLength="17.0" lengthAdjust="spacingAndGlyphs" stroke="#1c2a3a" stroke-width="0.22">LIT</text></g><path d="M537.80 514.3 V515.16 Q537.80 516.16 538.80 516.16 H543.30 Q544.30 516.16 544.30 515.16 V514.3 Z" fill="#c9553c"/><text x="541.5" y="530.2" font-family='"Liberation Sans", sans-serif' font-size="7.6" fill="#cc4e35" font-weight="bold" font-style="normal" text-anchor="middle" >-$ 3,508</text><g transform="rotate(-45 541.9 576.5)"><text x="541.9" y="576.5" font-family='"Liberation Serif", serif' font-size="8.8" fill="#1c2a3a" font-weight="bold" font-style="normal" text-anchor="end" textLength="29.0" lengthAdjust="spacingAndGlyphs" stroke="#1c2a3a" stroke-width="0.22">AGNC</text></g><path d="M563.00 514.3 V517.26 Q563.00 518.26 564.00 518.26 H568.50 Q569.50 518.26 569.50 517.26 V514.3 Z" fill="#c9553c"/><text x="566.7" y="532.3" font-family='"Liberation Sans", sans-serif' font-size="7.6" fill="#cc4e35" font-weight="bold" font-style="normal" text-anchor="middle" >-$ 7,453</text><g transform="rotate(-45 567.0 576.5)"><text x="567.0" y="576.5" font-family='"Liberation Serif", serif' font-size="8.8" fill="#1c2a3a" font-weight="bold" font-style="normal" text-anchor="end" textLength="34.2" lengthAdjust="spacingAndGlyphs" stroke="#1c2a3a" stroke-width="0.22">REI.UN</text></g><text x="628.1" y="284.2" font-family='"Liberation Serif", serif' font-size="12.9" fill="#6f7a84" font-weight="normal" font-style="normal" text-anchor="start" textLength="143.5" lengthAdjust="spacingAndGlyphs" stroke="#6f7a84" stroke-width="0.3">Dividends Recieved (CAD)</text><rect x="650.9" y="301.7" width="486.4" height="1.2" fill="#d9d9d9"/><text x="647" y="305.2" font-family='"Liberation Serif", serif' font-size="8.3" fill="#1c2a3a" font-weight="bold" font-style="normal" text-anchor="end" textLength="19.4" lengthAdjust="spacingAndGlyphs" stroke="#1c2a3a" stroke-width="0.22"><tspan font-size="7.3">$</tspan><tspan font-size="7.3" dy="1.33">4</tspan><tspan font-size="6.81" dy="-1.33">0</tspan><tspan font-size="6.81">0</tspan></text><rect x="650.9" y="364.2" width="486.4" height="1.2" fill="#d9d9d9"/><text x="647" y="367.7" font-family='"Liberation Serif", serif' font-size="8.3" fill="#1c2a3a" font-weight="bold" font-style="normal" text-anchor="end" textLength="19.4" lengthAdjust="spacingAndGlyphs" stroke="#1c2a3a" stroke-width="0.22"><tspan font-size="7.3">$</tspan><tspan font-size="7.3" dy="1.33">3</tspan><tspan font-size="6.81" dy="-1.33">0</tspan><tspan font-size="6.81">0</tspan></text><rect x="650.9" y="427.09999999999997" width="486.4" height="1.2" fill="#d9d9d9"/><text x="647" y="430.59999999999997" font-family='"Liberation Serif", serif' font-size="8.3" fill="#1c2a3a" font-weight="bold" font-style="normal" text-anchor="end" textLength="19.4" lengthAdjust="spacingAndGlyphs" stroke="#1c2a3a" stroke-width="0.22"><tspan font-size="7.3">$</tspan><tspan font-size="6.81">2</tspan><tspan font-size="6.81">0</tspan><tspan font-size="6.81">0</tspan></text><rect x="650.9" y="490.2" width="486.4" height="1.2" fill="#d9d9d9"/><text x="647" y="493.7" font-family='"Liberation Serif", serif' font-size="8.3" fill="#1c2a3a" font-weight="bold" font-style="normal" text-anchor="end" textLength="19.4" lengthAdjust="spacingAndGlyphs" stroke="#1c2a3a" stroke-width="0.22"><tspan font-size="7.3">$</tspan><tspan font-size="6.81">1</tspan><tspan font-size="6.81">0</tspan><tspan font-size="6.81">0</tspan></text><text x="647" y="556.9" font-family='"Liberation Serif", serif' font-size="8.3" fill="#1c2a3a" font-weight="bold" font-style="normal" text-anchor="end" textLength="9.7" lengthAdjust="spacingAndGlyphs" stroke="#1c2a3a" stroke-width="0.22"><tspan font-size="7.3">$</tspan><tspan font-size="6.81">0</tspan></text><path d="M654.80 554 V467.29 Q654.80 466.29 655.80 466.29 H660.40 Q661.40 466.29 661.40 467.29 V554 Z" fill="#009485"/><g transform="rotate(-90 661.2 558.6)"><text x="661.2" y="558.6" font-family='"Liberation Serif", serif' font-size="8.3" fill="#1c2a3a" font-weight="bold" font-style="normal" text-anchor="end" textLength="41.0" lengthAdjust="spacingAndGlyphs" stroke="#1c2a3a" stroke-width="0.22">Jan-<tspan font-size="7.47">2</tspan><tspan font-size="7.47">0</tspan><tspan font-size="7.47">2</tspan><tspan font-size="7.47">2</tspan></text></g><path d="M664.87 554 V466.03 Q664.87 465.03 665.87 465.03 H670.47 Q671.47 465.03 671.47 466.03 V554 Z" fill="#009485"/><g transform="rotate(-90 671.3 558.6)"><text x="671.3" y="558.6" font-family='"Liberation Serif", serif' font-size="8.3" fill="#1c2a3a" font-weight="bold" font-style="normal" text-anchor="end" textLength="41.6" lengthAdjust="spacingAndGlyphs" stroke="#1c2a3a" stroke-width="0.22">Feb-<tspan font-size="7.47">2</tspan><tspan font-size="7.47">0</tspan><tspan font-size="7.47">2</tspan><tspan font-size="7.47">2</tspan></text></g><path d="M674.94 554 V465.40 Q674.94 464.40 675.94 464.40 H680.54 Q681.54 464.40 681.54 465.40 V554 Z" fill="#009485"/><g transform="rotate(-90 681.3 558.6)"><text x="681.3" y="558.6" font-family='"Liberation Serif", serif' font-size="8.3" fill="#1c2a3a" font-weight="bold" font-style="normal" text-anchor="end" textLength="44.1" lengthAdjust="spacingAndGlyphs" stroke="#1c2a3a" stroke-width="0.22">Mar-<tspan font-size="7.47">2</tspan><tspan font-size="7.47">0</tspan><tspan font-size="7.47">2</tspan><tspan font-size="7.47">2</tspan></text></g><path d="M685.01 554 V424.38 Q685.01 423.38 686.01 423.38 H690.61 Q691.61 423.38 691.61 424.38 V554 Z" fill="#009485"/><g transform="rotate(-90 691.4 558.6)"><text x="691.4" y="558.6" font-family='"Liberation Serif", serif' font-size="8.3" fill="#1c2a3a" font-weight="bold" font-style="normal" text-anchor="end" textLength="42.4" lengthAdjust="spacingAndGlyphs" stroke="#1c2a3a" stroke-width="0.22">Apr-<tspan font-size="7.47">2</tspan><tspan font-size="7.47">0</tspan><tspan font-size="7.47">2</tspan><tspan font-size="7.47">2</tspan></text></g><path d="M695.08 554 V435.74 Q695.08 434.74 696.08 434.74 H700.68 Q701.68 434.74 701.68 435.74 V554 Z" fill="#009485"/><g transform="rotate(-90 701.5 558.6)"><text x="701.5" y="558.6" font-family='"Liberation Serif", serif' font-size="8.3" fill="#1c2a3a" font-weight="bold" font-style="normal" text-anchor="end" textLength="45.1" lengthAdjust="spacingAndGlyphs" stroke="#1c2a3a" stroke-width="0.22">May-<tspan font-size="7.47">2</tspan><tspan font-size="7.47">0</tspan><tspan font-size="7.47">2</tspan><tspan font-size="7.47">2</tspan></text></g><path d="M705.15 554 V401.04 Q705.15 400.04 706.15 400.04 H710.75 Q711.75 400.04 711.75 401.04 V554 Z" fill="#009485"/><g transform="rotate(-90 711.6 558.6)"><text x="711.6" y="558.6" font-family='"Liberation Serif", serif' font-size="8.3" fill="#1c2a3a" font-weight="bold" font-style="normal" text-anchor="end" textLength="41.6" lengthAdjust="spacingAndGlyphs" stroke="#1c2a3a" stroke-width="0.22">Jun-<tspan font-size="7.47">2</tspan><tspan font-size="7.47">0</tspan><tspan font-size="7.47">2</tspan><tspan font-size="7.47">2</tspan></text></g><path d="M715.22 554 V410.50 Q715.22 409.50 716.22 409.50 H720.82 Q721.82 409.50 721.82 410.50 V554 Z" fill="#009485"/><g transform="rotate(-90 721.6 558.6)"><text x="721.6" y="558.6" font-family='"Liberation Serif", serif' font-size="8.3" fill="#1c2a3a" font-weight="bold" font-style="normal" text-anchor="end" textLength="38.7" lengthAdjust="spacingAndGlyphs" stroke="#1c2a3a" stroke-width="0.22">Jul-<tspan font-size="7.47">2</tspan><tspan font-size="7.47">0</tspan><tspan font-size="7.47">2</tspan><tspan font-size="7.47">2</tspan></text></g><path d="M725.29 554 V436.37 Q725.29 435.37 726.29 435.37 H730.89 Q731.89 435.37 731.89 436.37 V554 Z" fill="#009485"/><g transform="rotate(-90 731.7 558.6)"><text x="731.7" y="558.6" font-family='"Liberation Serif", serif' font-size="8.3" fill="#1c2a3a" font-weight="bold" font-style="normal" text-anchor="end" textLength="43.3" lengthAdjust="spacingAndGlyphs" stroke="#1c2a3a" stroke-width="0.22">Aug-<tspan font-size="7.47">2</tspan><tspan font-size="7.47">0</tspan><tspan font-size="7.47">2</tspan><tspan font-size="7.47">2</tspan></text></g><path d="M735.36 554 V341.09 Q735.36 340.09 736.36 340.09 H740.96 Q741.96 340.09 741.96 341.09 V554 Z" fill="#009485"/><g transform="rotate(-90 741.8 558.6)"><text x="741.8" y="558.6" font-family='"Liberation Serif", serif' font-size="8.3" fill="#1c2a3a" font-weight="bold" font-style="normal" text-anchor="end" textLength="41.0" lengthAdjust="spacingAndGlyphs" stroke="#1c2a3a" stroke-width="0.22">Sep-<tspan font-size="7.47">2</tspan><tspan font-size="7.47">0</tspan><tspan font-size="7.47">2</tspan><tspan font-size="7.47">2</tspan></text></g><path d="M745.43 554 V334.78 Q745.43 333.78 746.43 333.78 H751.03 Q752.03 333.78 752.03 334.78 V554 Z" fill="#009485"/><g transform="rotate(-90 751.8 558.6)"><text x="751.8" y="558.6" font-family='"Liberation Serif", serif' font-size="8.3" fill="#1c2a3a" font-weight="bold" font-style="normal" text-anchor="end" textLength="41.0" lengthAdjust="spacingAndGlyphs" stroke="#1c2a3a" stroke-width="0.22">Oct-<tspan font-size="7.47">2</tspan><tspan font-size="7.47">0</tspan><tspan font-size="7.47">2</tspan><tspan font-size="7.47">2</tspan></text></g><path d="M755.50 554 V431.95 Q755.50 430.95 756.50 430.95 H761.10 Q762.10 430.95 762.10 431.95 V554 Z" fill="#009485"/><g transform="rotate(-90 761.9 558.6)"><text x="761.9" y="558.6" font-family='"Liberation Serif", serif' font-size="8.3" fill="#1c2a3a" font-weight="bold" font-style="normal" text-anchor="end" textLength="42.7" lengthAdjust="spacingAndGlyphs" stroke="#1c2a3a" stroke-width="0.22">Nov-<tspan font-size="7.47">2</tspan><tspan font-size="7.47">0</tspan><tspan font-size="7.47">2</tspan><tspan font-size="7.47">2</tspan></text></g><g transform="rotate(-90 772.0 558.6)"><text x="772.0" y="558.6" font-family='"Liberation Serif", serif' font-size="8.3" fill="#1c2a3a" font-weight="bold" font-style="normal" text-anchor="end" textLength="41.6" lengthAdjust="spacingAndGlyphs" stroke="#1c2a3a" stroke-width="0.22">Dec-<tspan font-size="7.47">2</tspan><tspan font-size="7.47">0</tspan><tspan font-size="7.47">2</tspan><tspan font-size="7.47">2</tspan></text></g><g transform="rotate(-90 782.0 558.6)"><text x="782.0" y="558.6" font-family='"Liberation Serif", serif' font-size="8.3" fill="#1c2a3a" font-weight="bold" font-style="normal" text-anchor="end" textLength="41.0" lengthAdjust="spacingAndGlyphs" stroke="#1c2a3a" stroke-width="0.22">Jan-<tspan font-size="7.47">2</tspan><tspan font-size="7.47">0</tspan><tspan font-size="7.47">2</tspan><tspan font-size="7.3" dy="1.33">3</tspan></text></g><g transform="rotate(-90 792.1 558.6)"><text x="792.1" y="558.6" font-family='"Liberation Serif", serif' font-size="8.3" fill="#1c2a3a" font-weight="bold" font-style="normal" text-anchor="end" textLength="41.6" lengthAdjust="spacingAndGlyphs" stroke="#1c2a3a" stroke-width="0.22">Feb-<tspan font-size="7.47">2</tspan><tspan font-size="7.47">0</tspan><tspan font-size="7.47">2</tspan><tspan font-size="7.3" dy="1.33">3</tspan></text></g><g transform="rotate(-90 802.2 558.6)"><text x="802.2" y="558.6" font-family='"Liberation Serif", serif' font-size="8.3" fill="#1c2a3a" font-weight="bold" font-style="normal" text-anchor="end" textLength="44.1" lengthAdjust="spacingAndGlyphs" stroke="#1c2a3a" stroke-width="0.22">Mar-<tspan font-size="7.47">2</tspan><tspan font-size="7.47">0</tspan><tspan font-size="7.47">2</tspan><tspan font-size="7.3" dy="1.33">3</tspan></text></g><g transform="rotate(-90 812.3 558.6)"><text x="812.3" y="558.6" font-family='"Liberation Serif", serif' font-size="8.3" fill="#1c2a3a" font-weight="bold" font-style="normal" text-anchor="end" textLength="42.4" lengthAdjust="spacingAndGlyphs" stroke="#1c2a3a" stroke-width="0.22">Apr-<tspan font-size="7.47">2</tspan><tspan font-size="7.47">0</tspan><tspan font-size="7.47">2</tspan><tspan font-size="7.3" dy="1.33">3</tspan></text></g><g transform="rotate(-90 822.3 558.6)"><text x="822.3" y="558.6" font-family='"Liberation Serif", serif' font-size="8.3" fill="#1c2a3a" font-weight="bold" font-style="normal" text-anchor="end" textLength="45.1" lengthAdjust="spacingAndGlyphs" stroke="#1c2a3a" stroke-width="0.22">May-<tspan font-size="7.47">2</tspan><tspan font-size="7.47">0</tspan><tspan font-size="7.47">2</tspan><tspan font-size="7.3" dy="1.33">3</tspan></text></g><g transform="rotate(-90 832.4 558.6)"><text x="832.4" y="558.6" font-family='"Liberation Serif", serif' font-size="8.3" fill="#1c2a3a" font-weight="bold" font-style="normal" text-anchor="end" textLength="41.6" lengthAdjust="spacingAndGlyphs" stroke="#1c2a3a" stroke-width="0.22">Jun-<tspan font-size="7.47">2</tspan><tspan font-size="7.47">0</tspan><tspan font-size="7.47">2</tspan><tspan font-size="7.3" dy="1.33">3</tspan></text></g><g transform="rotate(-90 842.5 558.6)"><text x="842.5" y="558.6" font-family='"Liberation Serif", serif' font-size="8.3" fill="#1c2a3a" font-weight="bold" font-style="normal" text-anchor="end" textLength="38.7" lengthAdjust="spacingAndGlyphs" stroke="#1c2a3a" stroke-width="0.22">Jul-<tspan font-size="7.47">2</tspan><tspan font-size="7.47">0</tspan><tspan font-size="7.47">2</tspan><tspan font-size="7.3" dy="1.33">3</tspan></text></g><g transform="rotate(-90 852.5 558.6)"><text x="852.5" y="558.6" font-family='"Liberation Serif", serif' font-size="8.3" fill="#1c2a3a" font-weight="bold" font-style="normal" text-anchor="end" textLength="43.3" lengthAdjust="spacingAndGlyphs" stroke="#1c2a3a" stroke-width="0.22">Aug-<tspan font-size="7.47">2</tspan><tspan font-size="7.47">0</tspan><tspan font-size="7.47">2</tspan><tspan font-size="7.3" dy="1.33">3</tspan></text></g><g transform="rotate(-90 862.6 558.6)"><text x="862.6" y="558.6" font-family='"Liberation Serif", serif' font-size="8.3" fill="#1c2a3a" font-weight="bold" font-style="normal" text-anchor="end" textLength="41.0" lengthAdjust="spacingAndGlyphs" stroke="#1c2a3a" stroke-width="0.22">Sep-<tspan font-size="7.47">2</tspan><tspan font-size="7.47">0</tspan><tspan font-size="7.47">2</tspan><tspan font-size="7.3" dy="1.33">3</tspan></text></g><g transform="rotate(-90 872.7 558.6)"><text x="872.7" y="558.6" font-family='"Liberation Serif", serif' font-size="8.3" fill="#1c2a3a" font-weight="bold" font-style="normal" text-anchor="end" textLength="41.0" lengthAdjust="spacingAndGlyphs" stroke="#1c2a3a" stroke-width="0.22">Oct-<tspan font-size="7.47">2</tspan><tspan font-size="7.47">0</tspan><tspan font-size="7.47">2</tspan><tspan font-size="7.3" dy="1.33">3</tspan></text></g><g transform="rotate(-90 882.7 558.6)"><text x="882.7" y="558.6" font-family='"Liberation Serif", serif' font-size="8.3" fill="#1c2a3a" font-weight="bold" font-style="normal" text-anchor="end" textLength="42.7" lengthAdjust="spacingAndGlyphs" stroke="#1c2a3a" stroke-width="0.22">Nov-<tspan font-size="7.47">2</tspan><tspan font-size="7.47">0</tspan><tspan font-size="7.47">2</tspan><tspan font-size="7.3" dy="1.33">3</tspan></text></g><g transform="rotate(-90 892.8 558.6)"><text x="892.8" y="558.6" font-family='"Liberation Serif", serif' font-size="8.3" fill="#1c2a3a" font-weight="bold" font-style="normal" text-anchor="end" textLength="41.6" lengthAdjust="spacingAndGlyphs" stroke="#1c2a3a" stroke-width="0.22">Dec-<tspan font-size="7.47">2</tspan><tspan font-size="7.47">0</tspan><tspan font-size="7.47">2</tspan><tspan font-size="7.3" dy="1.33">3</tspan></text></g><g transform="rotate(-90 902.9 558.6)"><text x="902.9" y="558.6" font-family='"Liberation Serif", serif' font-size="8.3" fill="#1c2a3a" font-weight="bold" font-style="normal" text-anchor="end" textLength="41.0" lengthAdjust="spacingAndGlyphs" stroke="#1c2a3a" stroke-width="0.22">Jan-<tspan font-size="7.47">2</tspan><tspan font-size="7.47">0</tspan><tspan font-size="7.47">2</tspan><tspan font-size="7.3" dy="1.33">4</tspan></text></g><g transform="rotate(-90 913.0 558.6)"><text x="913.0" y="558.6" font-family='"Liberation Serif", serif' font-size="8.3" fill="#1c2a3a" font-weight="bold" font-style="normal" text-anchor="end" textLength="41.6" lengthAdjust="spacingAndGlyphs" stroke="#1c2a3a" stroke-width="0.22">Feb-<tspan font-size="7.47">2</tspan><tspan font-size="7.47">0</tspan><tspan font-size="7.47">2</tspan><tspan font-size="7.3" dy="1.33">4</tspan></text></g><g transform="rotate(-90 923.0 558.6)"><text x="923.0" y="558.6" font-family='"Liberation Serif", serif' font-size="8.3" fill="#1c2a3a" font-weight="bold" font-style="normal" text-anchor="end" textLength="44.1" lengthAdjust="spacingAndGlyphs" stroke="#1c2a3a" stroke-width="0.22">Mar-<tspan font-size="7.47">2</tspan><tspan font-size="7.47">0</tspan><tspan font-size="7.47">2</tspan><tspan font-size="7.3" dy="1.33">4</tspan></text></g><g transform="rotate(-90 933.1 558.6)"><text x="933.1" y="558.6" font-family='"Liberation Serif", serif' font-size="8.3" fill="#1c2a3a" font-weight="bold" font-style="normal" text-anchor="end" textLength="42.4" lengthAdjust="spacingAndGlyphs" stroke="#1c2a3a" stroke-width="0.22">Apr-<tspan font-size="7.47">2</tspan><tspan font-size="7.47">0</tspan><tspan font-size="7.47">2</tspan><tspan font-size="7.3" dy="1.33">4</tspan></text></g><g transform="rotate(-90 943.2 558.6)"><text x="943.2" y="558.6" font-family='"Liberation Serif", serif' font-size="8.3" fill="#1c2a3a" font-weight="bold" font-style="normal" text-anchor="end" textLength="45.1" lengthAdjust="spacingAndGlyphs" stroke="#1c2a3a" stroke-width="0.22">May-<tspan font-size="7.47">2</tspan><tspan font-size="7.47">0</tspan><tspan font-size="7.47">2</tspan><tspan font-size="7.3" dy="1.33">4</tspan></text></g><g transform="rotate(-90 953.2 558.6)"><text x="953.2" y="558.6" font-family='"Liberation Serif", serif' font-size="8.3" fill="#1c2a3a" font-weight="bold" font-style="normal" text-anchor="end" textLength="41.6" lengthAdjust="spacingAndGlyphs" stroke="#1c2a3a" stroke-width="0.22">Jun-<tspan font-size="7.47">2</tspan><tspan font-size="7.47">0</tspan><tspan font-size="7.47">2</tspan><tspan font-size="7.3" dy="1.33">4</tspan></text></g><g transform="rotate(-90 963.3 558.6)"><text x="963.3" y="558.6" font-family='"Liberation Serif", serif' font-size="8.3" fill="#1c2a3a" font-weight="bold" font-style="normal" text-anchor="end" textLength="38.7" lengthAdjust="spacingAndGlyphs" stroke="#1c2a3a" stroke-width="0.22">Jul-<tspan font-size="7.47">2</tspan><tspan font-size="7.47">0</tspan><tspan font-size="7.47">2</tspan><tspan font-size="7.3" dy="1.33">4</tspan></text></g><g transform="rotate(-90 973.4 558.6)"><text x="973.4" y="558.6" font-family='"Liberation Serif", serif' font-size="8.3" fill="#1c2a3a" font-weight="bold" font-style="normal" text-anchor="end" textLength="43.3" lengthAdjust="spacingAndGlyphs" stroke="#1c2a3a" stroke-width="0.22">Aug-<tspan font-size="7.47">2</tspan><tspan font-size="7.47">0</tspan><tspan font-size="7.47">2</tspan><tspan font-size="7.3" dy="1.33">4</tspan></text></g><g transform="rotate(-90 983.4 558.6)"><text x="983.4" y="558.6" font-family='"Liberation Serif", serif' font-size="8.3" fill="#1c2a3a" font-weight="bold" font-style="normal" text-anchor="end" textLength="41.0" lengthAdjust="spacingAndGlyphs" stroke="#1c2a3a" stroke-width="0.22">Sep-<tspan font-size="7.47">2</tspan><tspan font-size="7.47">0</tspan><tspan font-size="7.47">2</tspan><tspan font-size="7.3" dy="1.33">4</tspan></text></g><g transform="rotate(-90 993.5 558.6)"><text x="993.5" y="558.6" font-family='"Liberation Serif", serif' font-size="8.3" fill="#1c2a3a" font-weight="bold" font-style="normal" text-anchor="end" textLength="41.0" lengthAdjust="spacingAndGlyphs" stroke="#1c2a3a" stroke-width="0.22">Oct-<tspan font-size="7.47">2</tspan><tspan font-size="7.47">0</tspan><tspan font-size="7.47">2</tspan><tspan font-size="7.3" dy="1.33">4</tspan></text></g><g transform="rotate(-90 1003.6 558.6)"><text x="1003.6" y="558.6" font-family='"Liberation Serif", serif' font-size="8.3" fill="#1c2a3a" font-weight="bold" font-style="normal" text-anchor="end" textLength="42.7" lengthAdjust="spacingAndGlyphs" stroke="#1c2a3a" stroke-width="0.22">Nov-<tspan font-size="7.47">2</tspan><tspan font-size="7.47">0</tspan><tspan font-size="7.47">2</tspan><tspan font-size="7.3" dy="1.33">4</tspan></text></g><g transform="rotate(-90 1013.6 558.6)"><text x="1013.6" y="558.6" font-family='"Liberation Serif", serif' font-size="8.3" fill="#1c2a3a" font-weight="bold" font-style="normal" text-anchor="end" textLength="41.6" lengthAdjust="spacingAndGlyphs" stroke="#1c2a3a" stroke-width="0.22">Dec-<tspan font-size="7.47">2</tspan><tspan font-size="7.47">0</tspan><tspan font-size="7.47">2</tspan><tspan font-size="7.3" dy="1.33">4</tspan></text></g><g transform="rotate(-90 1023.7 558.6)"><text x="1023.7" y="558.6" font-family='"Liberation Serif", serif' font-size="8.3" fill="#1c2a3a" font-weight="bold" font-style="normal" text-anchor="end" textLength="41.0" lengthAdjust="spacingAndGlyphs" stroke="#1c2a3a" stroke-width="0.22">Jan-<tspan font-size="7.47">2</tspan><tspan font-size="7.47">0</tspan><tspan font-size="7.47">2</tspan><tspan font-size="7.3" dy="1.33">5</tspan></text></g><g transform="rotate(-90 1033.8 558.6)"><text x="1033.8" y="558.6" font-family='"Liberation Serif", serif' font-size="8.3" fill="#1c2a3a" font-weight="bold" font-style="normal" text-anchor="end" textLength="41.6" lengthAdjust="spacingAndGlyphs" stroke="#1c2a3a" stroke-width="0.22">Feb-<tspan font-size="7.47">2</tspan><tspan font-size="7.47">0</tspan><tspan font-size="7.47">2</tspan><tspan font-size="7.3" dy="1.33">5</tspan></text></g><g transform="rotate(-90 1043.9 558.6)"><text x="1043.9" y="558.6" font-family='"Liberation Serif", serif' font-size="8.3" fill="#1c2a3a" font-weight="bold" font-style="normal" text-anchor="end" textLength="44.1" lengthAdjust="spacingAndGlyphs" stroke="#1c2a3a" stroke-width="0.22">Mar-<tspan font-size="7.47">2</tspan><tspan font-size="7.47">0</tspan><tspan font-size="7.47">2</tspan><tspan font-size="7.3" dy="1.33">5</tspan></text></g><g transform="rotate(-90 1053.9 558.6)"><text x="1053.9" y="558.6" font-family='"Liberation Serif", serif' font-size="8.3" fill="#1c2a3a" font-weight="bold" font-style="normal" text-anchor="end" textLength="42.4" lengthAdjust="spacingAndGlyphs" stroke="#1c2a3a" stroke-width="0.22">Apr-<tspan font-size="7.47">2</tspan><tspan font-size="7.47">0</tspan><tspan font-size="7.47">2</tspan><tspan font-size="7.3" dy="1.33">5</tspan></text></g><g transform="rotate(-90 1064.0 558.6)"><text x="1064.0" y="558.6" font-family='"Liberation Serif", serif' font-size="8.3" fill="#1c2a3a" font-weight="bold" font-style="normal" text-anchor="end" textLength="45.1" lengthAdjust="spacingAndGlyphs" stroke="#1c2a3a" stroke-width="0.22">May-<tspan font-size="7.47">2</tspan><tspan font-size="7.47">0</tspan><tspan font-size="7.47">2</tspan><tspan font-size="7.3" dy="1.33">5</tspan></text></g><g transform="rotate(-90 1074.1 558.6)"><text x="1074.1" y="558.6" font-family='"Liberation Serif", serif' font-size="8.3" fill="#1c2a3a" font-weight="bold" font-style="normal" text-anchor="end" textLength="41.6" lengthAdjust="spacingAndGlyphs" stroke="#1c2a3a" stroke-width="0.22">Jun-<tspan font-size="7.47">2</tspan><tspan font-size="7.47">0</tspan><tspan font-size="7.47">2</tspan><tspan font-size="7.3" dy="1.33">5</tspan></text></g><g transform="rotate(-90 1084.1 558.6)"><text x="1084.1" y="558.6" font-family='"Liberation Serif", serif' font-size="8.3" fill="#1c2a3a" font-weight="bold" font-style="normal" text-anchor="end" textLength="38.7" lengthAdjust="spacingAndGlyphs" stroke="#1c2a3a" stroke-width="0.22">Jul-<tspan font-size="7.47">2</tspan><tspan font-size="7.47">0</tspan><tspan font-size="7.47">2</tspan><tspan font-size="7.3" dy="1.33">5</tspan></text></g><g transform="rotate(-90 1094.2 558.6)"><text x="1094.2" y="558.6" font-family='"Liberation Serif", serif' font-size="8.3" fill="#1c2a3a" font-weight="bold" font-style="normal" text-anchor="end" textLength="43.3" lengthAdjust="spacingAndGlyphs" stroke="#1c2a3a" stroke-width="0.22">Aug-<tspan font-size="7.47">2</tspan><tspan font-size="7.47">0</tspan><tspan font-size="7.47">2</tspan><tspan font-size="7.3" dy="1.33">5</tspan></text></g><g transform="rotate(-90 1104.3 558.6)"><text x="1104.3" y="558.6" font-family='"Liberation Serif", serif' font-size="8.3" fill="#1c2a3a" font-weight="bold" font-style="normal" text-anchor="end" textLength="41.0" lengthAdjust="spacingAndGlyphs" stroke="#1c2a3a" stroke-width="0.22">Sep-<tspan font-size="7.47">2</tspan><tspan font-size="7.47">0</tspan><tspan font-size="7.47">2</tspan><tspan font-size="7.3" dy="1.33">5</tspan></text></g><g transform="rotate(-90 1114.3 558.6)"><text x="1114.3" y="558.6" font-family='"Liberation Serif", serif' font-size="8.3" fill="#1c2a3a" font-weight="bold" font-style="normal" text-anchor="end" textLength="41.0" lengthAdjust="spacingAndGlyphs" stroke="#1c2a3a" stroke-width="0.22">Oct-<tspan font-size="7.47">2</tspan><tspan font-size="7.47">0</tspan><tspan font-size="7.47">2</tspan><tspan font-size="7.3" dy="1.33">5</tspan></text></g><g transform="rotate(-90 1124.4 558.6)"><text x="1124.4" y="558.6" font-family='"Liberation Serif", serif' font-size="8.3" fill="#1c2a3a" font-weight="bold" font-style="normal" text-anchor="end" textLength="42.7" lengthAdjust="spacingAndGlyphs" stroke="#1c2a3a" stroke-width="0.22">Nov-<tspan font-size="7.47">2</tspan><tspan font-size="7.47">0</tspan><tspan font-size="7.47">2</tspan><tspan font-size="7.3" dy="1.33">5</tspan></text></g><g transform="rotate(-90 1134.5 558.6)"><text x="1134.5" y="558.6" font-family='"Liberation Serif", serif' font-size="8.3" fill="#1c2a3a" font-weight="bold" font-style="normal" text-anchor="end" textLength="41.6" lengthAdjust="spacingAndGlyphs" stroke="#1c2a3a" stroke-width="0.22">Dec-<tspan font-size="7.47">2</tspan><tspan font-size="7.47">0</tspan><tspan font-size="7.47">2</tspan><tspan font-size="7.3" dy="1.33">5</tspan></text></g><rect x="650.9" y="554.7" width="486.4" height="1.3" fill="#fff"/><rect x="650.9" y="553.6" width="486.4" height="1.1" fill="#666"/><text x="46.4" y="657.6" font-family='"Liberation Serif", serif' font-size="12.9" fill="#6f7a84" font-weight="normal" font-style="normal" text-anchor="start" textLength="113.8" lengthAdjust="spacingAndGlyphs" stroke="#6f7a84" stroke-width="0.3">Current Value (CAD)</text><path d="M237.3 818.2 L237.30 671.80 A146.4 146.4 0 0 1 243.05 671.91 Z" fill="#0d2c47"/><path d="M237.3 818.2 L243.05 671.91 A146.4 146.4 0 0 1 250.72 672.42 Z" fill="#bf5a3d"/><path d="M237.3 818.2 L250.72 672.42 A146.4 146.4 0 0 1 266.36 674.71 Z" fill="#a97c5b"/><path d="M237.3 818.2 L266.36 674.71 A146.4 146.4 0 0 1 268.49 675.16 Z" fill="#0a8c7e"/><path d="M237.3 818.2 L268.49 675.16 A146.4 146.4 0 0 1 282.30 678.89 Z" fill="#efdfce"/><path d="M237.3 818.2 L282.30 678.89 A146.4 146.4 0 0 1 288.33 680.98 Z" fill="#68c4d5"/><path d="M237.3 818.2 L288.33 680.98 A146.4 146.4 0 0 1 294.74 683.54 Z" fill="#4b6b82"/><path d="M237.3 818.2 L294.74 683.54 A146.4 146.4 0 0 1 306.26 689.06 Z" fill="#d08a79"/><path d="M237.3 818.2 L306.26 689.06 A146.4 146.4 0 0 1 313.79 693.37 Z" fill="#c8a78e"/><path d="M237.3 818.2 L313.79 693.37 A146.4 146.4 0 0 1 360.91 739.75 Z" fill="#4fb2a6"/><path d="M237.3 818.2 L360.91 739.75 A146.4 146.4 0 0 1 363.70 744.34 Z" fill="#f5e8db"/><path d="M237.3 818.2 L363.70 744.34 A146.4 146.4 0 0 1 367.16 750.60 Z" fill="#a3dbe4"/><path d="M237.3 818.2 L367.16 750.60 A146.4 146.4 0 0 1 377.89 777.36 Z" fill="#e0cfc2"/><path d="M237.3 818.2 L377.89 777.36 A146.4 146.4 0 1 1 213.89 673.68 Z" fill="#9bd5cc"/><path d="M237.3 818.2 L213.89 673.68 A146.4 146.4 0 0 1 231.17 671.93 Z" fill="#f9efe5"/><path d="M237.3 818.2 L231.17 671.93 A146.4 146.4 0 0 1 237.30 671.80 Z" fill="#cfeaf2"/><path d="M223.4 680.2 H46.8" stroke="#777" stroke-width="0.9" fill="none"/><circle cx="223.4" cy="680.2" r="1" fill="#777"/><path d="M258 681 L427.2 680.7" stroke="#777" stroke-width="0.9" fill="none"/><circle cx="258" cy="681" r="1" fill="#777"/><path d="M274 684.3 L387.8 697.3 H427.2" stroke="#777" stroke-width="0.9" fill="none"/><circle cx="274" cy="684.3" r="1" fill="#777"/><path d="M297 693 L387.8 713.6 H427.2" stroke="#777" stroke-width="0.9" fill="none"/><circle cx="297" cy="693" r="1" fill="#777"/><path d="M333.6 718.7 L386.9 730.4 H427.2" stroke="#777" stroke-width="0.9" fill="none"/><circle cx="333.6" cy="718.7" r="1" fill="#777"/><path d="M365.2 765.6 H427.2" stroke="#777" stroke-width="0.9" fill="none"/><circle cx="365.2" cy="765.6" r="1" fill="#777"/><path d="M163.8 936.1 H46.4" stroke="#777" stroke-width="0.9" fill="none"/><circle cx="163.8" cy="936.1" r="1" fill="#777"/><text x="427.2" y="678.2" font-family='"Liberation Serif", serif' font-size="8" fill="#2a3744" font-weight="normal" font-style="normal" text-anchor="end" textLength="16.5" lengthAdjust="spacingAndGlyphs" stroke="#2a3744" stroke-width="0.25">GDX</text><text x="427.2" y="687.8" font-family='"Liberation Serif", serif' font-size="8" fill="#8a9299" font-weight="normal" font-style="normal" text-anchor="end" textLength="15.8" lengthAdjust="spacingAndGlyphs" ><tspan font-size="7.2">1</tspan>.6%</text><text x="427.2" y="695" font-family='"Liberation Serif", serif' font-size="8" fill="#2a3744" font-weight="normal" font-style="normal" text-anchor="end" textLength="12.1" lengthAdjust="spacingAndGlyphs" stroke="#2a3744" stroke-width="0.25">ITA</text><text x="427.2" y="704.6" font-family='"Liberation Serif", serif' font-size="8" fill="#8a9299" font-weight="normal" font-style="normal" text-anchor="end" textLength="15.8" lengthAdjust="spacingAndGlyphs" ><tspan font-size="7.2">1</tspan>.<tspan font-size="7.04" dy="1.28">7</tspan><tspan dy="-1.28">%</tspan></text><text x="427.2" y="711.2" font-family='"Liberation Serif", serif' font-size="8" fill="#2a3744" font-weight="normal" font-style="normal" text-anchor="end" textLength="16.9" lengthAdjust="spacingAndGlyphs" stroke="#2a3744" stroke-width="0.25">POW</text><text x="427.2" y="720.8" font-family='"Liberation Serif", serif' font-size="8" fill="#8a9299" font-weight="normal" font-style="normal" text-anchor="end" textLength="15.8" lengthAdjust="spacingAndGlyphs" ><tspan font-size="7.2">1</tspan>.<tspan font-size="7.04" dy="1.28">4</tspan><tspan dy="-1.28">%</tspan></text><text x="427.2" y="728" font-family='"Liberation Serif", serif' font-size="8" fill="#2a3744" font-weight="normal" font-style="normal" text-anchor="end" textLength="13.9" lengthAdjust="spacingAndGlyphs" stroke="#2a3744" stroke-width="0.25">SPY</text><text x="427.2" y="737.6" font-family='"Liberation Serif", serif' font-size="8" fill="#8a9299" font-weight="normal" font-style="normal" text-anchor="end" textLength="15.8" lengthAdjust="spacingAndGlyphs" ><tspan font-size="7.04" dy="1.28">7</tspan><tspan dy="-1.28">.</tspan><tspan font-size="7.04" dy="1.28">3</tspan><tspan dy="-1.28">%</tspan></text><text x="427.2" y="764" font-family='"Liberation Serif", serif' font-size="8" fill="#2a3744" font-weight="normal" font-style="normal" text-anchor="end" textLength="21.5" lengthAdjust="spacingAndGlyphs" stroke="#2a3744" stroke-width="0.25">AGNC</text><text x="427.2" y="773.6" font-family='"Liberation Serif", serif' font-size="8" fill="#8a9299" font-weight="normal" font-style="normal" text-anchor="end" textLength="15.8" lengthAdjust="spacingAndGlyphs" ><tspan font-size="7.04" dy="1.28">3</tspan><tspan dy="-1.28">.</tspan><tspan font-size="7.2">0</tspan>%</text><text x="46.6" y="678.2" font-family='"Liberation Serif", serif' font-size="8" fill="#2a3744" font-weight="normal" font-style="normal" text-anchor="start" textLength="30.8" lengthAdjust="spacingAndGlyphs" stroke="#2a3744" stroke-width="0.25">ETHCAD</text><text x="46.6" y="688.3" font-family='"Liberation Serif", serif' font-size="8" fill="#8a9299" font-weight="normal" font-style="normal" text-anchor="start" textLength="15.8" lengthAdjust="spacingAndGlyphs" ><tspan font-size="7.2">1</tspan>.<tspan font-size="7.04" dy="1.28">9</tspan><tspan dy="-1.28">%</tspan></text><text x="46.6" y="933.8" font-family='"Liberation Serif", serif' font-size="8" fill="#2a3744" font-weight="normal" font-style="normal" text-anchor="start" textLength="30.0" lengthAdjust="spacingAndGlyphs" stroke="#2a3744" stroke-width="0.25">BTCUSD</text><text x="46.6" y="943.4" font-family='"Liberation Serif", serif' font-size="8" fill="#8a9299" font-weight="normal" font-style="normal" text-anchor="start" textLength="19.6" lengthAdjust="spacingAndGlyphs" ><tspan font-size="7.04" dy="1.28">7</tspan><tspan font-size="7.04">7</tspan><tspan dy="-1.28">.</tspan><tspan font-size="7.2">2</tspan>%</text><text x="145.4" y="902.8" font-family='"Liberation Serif", serif' font-size="9.5" fill="#1f2a36" font-weight="normal" font-style="normal" text-anchor="start" textLength="81.6" lengthAdjust="spacingAndGlyphs" stroke="#1f2a36" stroke-width="0.2"><tspan font-size="8.36">$</tspan> <tspan font-size="8.36" dy="1.52">3</tspan><tspan font-size="8.36">9</tspan><tspan font-size="8.36">9</tspan><tspan dy="-1.52">,</tspan><tspan font-size="8.36" dy="1.52">7</tspan><tspan font-size="8.36" dy="-1.52">0</tspan>8.<tspan font-size="8.36" dy="1.52">7</tspan><tspan dy="-1.52">6</tspan> (<tspan font-size="8.36" dy="1.52">7</tspan><tspan font-size="8.36">7</tspan><tspan dy="-1.52">.</tspan><tspan font-size="8.36">2</tspan>%)</text><circle cx="609.5" cy="646.8" r="5" fill="#dc4437"/><rect x="608.9" y="643.3" width="1.3" height="4.3" fill="#fff"/><rect x="608.9" y="648.7" width="1.3" height="1.3" fill="#fff"/><text x="621" y="649.9" font-family='"Liberation Sans", sans-serif' font-size="8.8" fill="#d9443a" font-weight="normal" font-style="normal" text-anchor="start" textLength="105.2" lengthAdjust="spacingAndGlyphs" stroke="#d9443a" stroke-width="0.2">Column 2 must be numeric.</text><rect x="642.5" y="784.9" width="45.4" height="43.2" rx="4" fill="none" stroke="#d3d3d3" stroke-width="3"/><rect x="652.5" y="802.5" width="5" height="14" fill="#d3d3d3"/><rect x="662.7" y="794" width="5" height="22.5" fill="#d3d3d3"/><rect x="673" y="807" width="5" height="9.5" fill="#d3d3d3"/><rect x="904.6" y="670.3" width="227.7" height="2.2" fill="#111"/><rect x="904.6" y="697.4" width="227.7" height="2.2" fill="#111"/><rect x="904.6" y="724.5" width="227.7" height="2.2" fill="#111"/><rect x="904.6" y="751.6" width="227.7" height="2.2" fill="#111"/><rect x="904.6" y="778.5" width="227.7" height="2.2" fill="#111"/><rect x="904.6" y="791.6" width="227.7" height="2.2" fill="#111"/><rect x="904.6" y="818.6" width="227.7" height="2.2" fill="#111"/><text x="926.4" y="664.3" font-family='"Liberation Serif", serif' font-size="19.5" fill="#0b0b0b" font-weight="bold" font-style="normal" text-anchor="start" textLength="44.9" lengthAdjust="spacingAndGlyphs" >Year</text><text x="1013.3" y="664.3" font-family='"Liberation Serif", serif' font-size="19.5" fill="#0b0b0b" font-weight="bold" font-style="normal" text-anchor="start" textLength="97.2" lengthAdjust="spacingAndGlyphs" >Dividends</text><text x="924.6" y="690.8" font-family='"Liberation Serif", serif' font-size="19.5" fill="#0b0b0b" font-weight="bold" font-style="normal" text-anchor="start" textLength="47.6" lengthAdjust="spacingAndGlyphs" ><tspan font-size="15.99">2</tspan><tspan font-size="15.99">0</tspan><tspan font-size="15.99">2</tspan><tspan font-size="15.99">2</tspan></text><text x="1030.1" y="690.8" font-family='"Liberation Serif", serif' font-size="19.5" fill="#0b0b0b" font-weight="bold" font-style="normal" text-anchor="start" textLength="63.9" lengthAdjust="spacingAndGlyphs" ><tspan font-size="17.16">$</tspan><tspan font-size="15.99">2</tspan>,<tspan font-size="18.91" dy="3.71">3</tspan><tspan dy="-3.71">6</tspan><tspan font-size="18.91" dy="3.71">7</tspan></text><text x="924.6" y="718.1" font-family='"Liberation Serif", serif' font-size="19.5" fill="#0b0b0b" font-weight="bold" font-style="normal" text-anchor="start" textLength="47.6" lengthAdjust="spacingAndGlyphs" ><tspan font-size="15.99">2</tspan><tspan font-size="15.99">0</tspan><tspan font-size="15.99">2</tspan><tspan font-size="18.91" dy="3.71">3</tspan></text><text x="1049.8" y="718.1" font-family='"Liberation Serif", serif' font-size="19.5" fill="#0b0b0b" font-weight="bold" font-style="normal" text-anchor="start" textLength="24.2" lengthAdjust="spacingAndGlyphs" ><tspan font-size="17.16">$</tspan><tspan font-size="15.99">0</tspan></text><text x="924.6" y="745" font-family='"Liberation Serif", serif' font-size="19.5" fill="#0b0b0b" font-weight="bold" font-style="normal" text-anchor="start" textLength="47.6" lengthAdjust="spacingAndGlyphs" ><tspan font-size="15.99">2</tspan><tspan font-size="15.99">0</tspan><tspan font-size="15.99">2</tspan><tspan font-size="18.91" dy="3.71">4</tspan></text><text x="1049.8" y="745" font-family='"Liberation Serif", serif' font-size="19.5" fill="#0b0b0b" font-weight="bold" font-style="normal" text-anchor="start" textLength="24.2" lengthAdjust="spacingAndGlyphs" ><tspan font-size="17.16">$</tspan><tspan font-size="15.99">0</tspan></text><text x="924.6" y="772.3" font-family='"Liberation Serif", serif' font-size="19.5" fill="#0b0b0b" font-weight="bold" font-style="normal" text-anchor="start" textLength="47.6" lengthAdjust="spacingAndGlyphs" ><tspan font-size="15.99">2</tspan><tspan font-size="15.99">0</tspan><tspan font-size="15.99">2</tspan><tspan font-size="18.91" dy="3.71">5</tspan></text><text x="1049.8" y="772.3" font-family='"Liberation Serif", serif' font-size="19.5" fill="#0b0b0b" font-weight="bold" font-style="normal" text-anchor="start" textLength="24.2" lengthAdjust="spacingAndGlyphs" ><tspan font-size="17.16">$</tspan><tspan font-size="15.99">0</tspan></text><text x="919" y="811.9" font-family='"Liberation Serif", serif' font-size="19.5" fill="#0b0b0b" font-weight="bold" font-style="normal" text-anchor="start" textLength="124.2" lengthAdjust="spacingAndGlyphs" >Total to Date</text><text x="1053.5" y="811.9" font-family='"Liberation Serif", serif' font-size="19.5" fill="#0b0b0b" font-weight="bold" font-style="normal" text-anchor="start" textLength="64.5" lengthAdjust="spacingAndGlyphs" ><tspan font-size="17.16">$</tspan><tspan font-size="15.99">2</tspan>,<tspan font-size="18.91" dy="3.71">3</tspan><tspan dy="-3.71">6</tspan><tspan font-size="18.91" dy="3.71">7</tspan></text><text x="893.2" y="855.4" font-family='"Liberation Serif", serif' font-size="12.7" fill="#6f7a84" font-weight="normal" font-style="normal" text-anchor="start" textLength="188.1" lengthAdjust="spacingAndGlyphs" stroke="#6f7a84" stroke-width="0.3">Recieved Dividends by Year (CAD)</text><rect x="921" y="865.1" width="227.9" height="1.2" fill="#d9d9d9"/><text x="917.2" y="868.3000000000001" font-family='"Liberation Serif", serif' font-size="7.3" fill="#1c2a3a" font-weight="bold" font-style="normal" text-anchor="end" textLength="23.1" lengthAdjust="spacingAndGlyphs" stroke="#1c2a3a" stroke-width="0.22"><tspan font-size="6.42">$</tspan><tspan font-size="5.99">2</tspan>,<tspan font-size="6.42" dy="1.17">5</tspan><tspan font-size="5.99" dy="-1.17">0</tspan><tspan font-size="5.99">0</tspan></text><rect x="921" y="884.8" width="227.9" height="1.2" fill="#d9d9d9"/><text x="917.2" y="888.0" font-family='"Liberation Serif", serif' font-size="7.3" fill="#1c2a3a" font-weight="bold" font-style="normal" text-anchor="end" textLength="23.1" lengthAdjust="spacingAndGlyphs" stroke="#1c2a3a" stroke-width="0.22"><tspan font-size="6.42">$</tspan><tspan font-size="5.99">2</tspan>,<tspan font-size="5.99">0</tspan><tspan font-size="5.99">0</tspan><tspan font-size="5.99">0</tspan></text><rect x="921" y="904.5" width="227.9" height="1.2" fill="#d9d9d9"/><text x="917.2" y="907.7" font-family='"Liberation Serif", serif' font-size="7.3" fill="#1c2a3a" font-weight="bold" font-style="normal" text-anchor="end" textLength="23.1" lengthAdjust="spacingAndGlyphs" stroke="#1c2a3a" stroke-width="0.22"><tspan font-size="6.42">$</tspan><tspan font-size="5.99">1</tspan>,<tspan font-size="6.42" dy="1.17">5</tspan><tspan font-size="5.99" dy="-1.17">0</tspan><tspan font-size="5.99">0</tspan></text><rect x="921" y="924.4" width="227.9" height="1.2" fill="#d9d9d9"/><text x="917.2" y="927.6" font-family='"Liberation Serif", serif' font-size="7.3" fill="#1c2a3a" font-weight="bold" font-style="normal" text-anchor="end" textLength="23.1" lengthAdjust="spacingAndGlyphs" stroke="#1c2a3a" stroke-width="0.22"><tspan font-size="6.42">$</tspan><tspan font-size="5.99">1</tspan>,<tspan font-size="5.99">0</tspan><tspan font-size="5.99">0</tspan><tspan font-size="5.99">0</tspan></text><rect x="921" y="944.3" width="227.9" height="1.2" fill="#d9d9d9"/><text x="917.2" y="947.5" font-family='"Liberation Serif", serif' font-size="7.3" fill="#1c2a3a" font-weight="bold" font-style="normal" text-anchor="end" textLength="16.8" lengthAdjust="spacingAndGlyphs" stroke="#1c2a3a" stroke-width="0.22"><tspan font-size="6.42">$</tspan><tspan font-size="6.42" dy="1.17">5</tspan><tspan font-size="5.99" dy="-1.17">0</tspan><tspan font-size="5.99">0</tspan></text><text x="917.2" y="967.4" font-family='"Liberation Serif", serif' font-size="7.3" fill="#1c2a3a" font-weight="bold" font-style="normal" text-anchor="end" textLength="8.4" lengthAdjust="spacingAndGlyphs" stroke="#1c2a3a" stroke-width="0.22"><tspan font-size="6.42">$</tspan><tspan font-size="5.99">0</tspan></text><path d="M939.7 964.6 V873 Q939.7 871.5 941.2 871.5 H972.6 Q974.1 871.5 974.1 873 V964.6 Z" fill="#009485"/><rect x="921" y="963.9" width="227.9" height="1.6" fill="#8a8a8a"/><text x="955.8" y="975.6" font-family='"Liberation Serif", serif' font-size="7.5" fill="#1c2a3a" font-weight="bold" font-style="normal" text-anchor="middle" textLength="16.8" lengthAdjust="spacingAndGlyphs" stroke="#1c2a3a" stroke-width="0.22"><tspan font-size="6.15">2</tspan><tspan font-size="6.15">0</tspan><tspan font-size="6.15">2</tspan><tspan font-size="6.15">2</tspan></text><text x="1008.4" y="975.6" font-family='"Liberation Serif", serif' font-size="7.5" fill="#1c2a3a" font-weight="bold" font-style="normal" text-anchor="middle" textLength="16.8" lengthAdjust="spacingAndGlyphs" stroke="#1c2a3a" stroke-width="0.22"><tspan font-size="6.15">2</tspan><tspan font-size="6.15">0</tspan><tspan font-size="6.15">2</tspan><tspan font-size="6.6" dy="1.2">3</tspan></text><text x="1061" y="975.6" font-family='"Liberation Serif", serif' font-size="7.5" fill="#1c2a3a" font-weight="bold" font-style="normal" text-anchor="middle" textLength="16.8" lengthAdjust="spacingAndGlyphs" stroke="#1c2a3a" stroke-width="0.22"><tspan font-size="6.15">2</tspan><tspan font-size="6.15">0</tspan><tspan font-size="6.15">2</tspan><tspan font-size="6.6" dy="1.2">4</tspan></text><text x="1113.5" y="975.6" font-family='"Liberation Serif", serif' font-size="7.5" fill="#1c2a3a" font-weight="bold" font-style="normal" text-anchor="middle" textLength="16.8" lengthAdjust="spacingAndGlyphs" stroke="#1c2a3a" stroke-width="0.22"><tspan font-size="6.15">2</tspan><tspan font-size="6.15">0</tspan><tspan font-size="6.15">2</tspan><tspan font-size="6.6" dy="1.2">5</tspan></text><rect x="30.7" y="987.6" width="413.2" height="13.1" fill="#c9cccd"/><rect x="30.7" y="1000.7" width="69.1" height="12.2" fill="#c9cccd"/><rect x="99.8" y="1000.7" width="344.1" height="12.2" fill="#b7b7b7"/><rect x="30.7" y="1012.9" width="413.2" height="2.1" fill="#1b1f24"/><rect x="30.7" y="1015" width="413.2" height="3" fill="#f1f1f1"/><text x="32.8" y="997.6" font-family='"Liberation Serif", serif' font-size="9.5" fill="#222" font-weight="normal" font-style="italic" text-anchor="start" textLength="49.6" lengthAdjust="spacingAndGlyphs" stroke="#222" stroke-width="0.25">SUM of Total</text><text x="102.2" y="997.6" font-family='"Liberation Serif", serif' font-size="9.5" fill="#222" font-weight="normal" font-style="italic" text-anchor="start" textLength="17.5" lengthAdjust="spacingAndGlyphs" stroke="#222" stroke-width="0.25">Year</text><text x="32.8" y="1010.4" font-family='"Liberation Serif", serif' font-size="9.5" fill="#222" font-weight="normal" font-style="italic" text-anchor="start" textLength="29.5" lengthAdjust="spacingAndGlyphs" stroke="#222" stroke-width="0.25">Symbol</text><text x="134.2" y="1009.9" font-family='"Liberation Sans", sans-serif' font-size="8.3" fill="#111" font-weight="bold" font-style="normal" text-anchor="middle" >2022</text><text x="203.3" y="1009.9" font-family='"Liberation Sans", sans-serif' font-size="8.3" fill="#111" font-weight="bold" font-style="normal" text-anchor="middle" >2023</text><text x="272.1" y="1009.9" font-family='"Liberation Sans", sans-serif' font-size="8.3" fill="#111" font-weight="bold" font-style="normal" text-anchor="middle" >2024</text><text x="341.3" y="1009.9" font-family='"Liberation Sans", sans-serif' font-size="8.3" fill="#111" font-weight="bold" font-style="normal" text-anchor="middle" >2025</text><text x="410.4" y="1009.9" font-family='"Liberation Sans", sans-serif' font-size="8.3" fill="#111" font-weight="bold" font-style="normal" text-anchor="middle" >Grand Total</text><text x="459.5" y="1005.7" font-family='"Liberation Serif", serif' font-size="12.7" fill="#6f7a84" font-weight="normal" font-style="normal" text-anchor="start" textLength="175.1" lengthAdjust="spacingAndGlyphs" stroke="#6f7a84" stroke-width="0.3"><tspan font-size="10.41">2</tspan><tspan font-size="10.41">0</tspan><tspan font-size="10.41">2</tspan><tspan font-size="10.41">2</tspan> Recieved Dividends (CAD)</text><rect x="505.5" y="1015.5" width="287.2" height="1.1" fill="#d9d9d9"/><text x="501.4" y="1018.5" font-family='"Liberation Serif", serif' font-size="7.3" fill="#1c2a3a" font-weight="bold" font-style="normal" text-anchor="end" textLength="23.5" lengthAdjust="spacingAndGlyphs" stroke="#1c2a3a" stroke-width="0.22"><tspan font-size="6.42">$</tspan><tspan font-size="5.99">2</tspan>,<tspan font-size="5.99">0</tspan><tspan font-size="5.99">0</tspan><tspan font-size="5.99">0</tspan></text><text x="815.2" y="1005.7" font-family='"Liberation Serif", serif' font-size="12.7" fill="#6f7a84" font-weight="normal" font-style="normal" text-anchor="start" textLength="175.1" lengthAdjust="spacingAndGlyphs" stroke="#6f7a84" stroke-width="0.3"><tspan font-size="10.41">2</tspan><tspan font-size="10.41">0</tspan><tspan font-size="10.41">2</tspan><tspan font-size="11.18" dy="2.03">3</tspan><tspan dy="-2.03"> </tspan>Recieved Dividends (CAD)</text><rect x="849" y="1015.5" width="295" height="1.1" fill="#d9d9d9"/><text x="846" y="1018.5" font-family='"Liberation Serif", serif' font-size="7.3" fill="#1c2a3a" font-weight="bold" font-style="normal" text-anchor="end" textLength="6.5" lengthAdjust="spacingAndGlyphs" stroke="#1c2a3a" stroke-width="0.22"><tspan font-size="6.42">$</tspan><tspan font-size="5.99">1</tspan></text></svg></div>
<div class="abs" style="left:0;top:1033.5px;width:1445px;height:25.8px;background:#eeeeee"></div>
<div class="abs" style="left:0;top:1059.3px;width:1445px;height:1px;background:#c9c9c9"></div>
<div class="abs" style="left:0;top:1060.3px;width:1445px;height:46.7px;background:#000"></div>
<div class="abs" style="left:0;top:1060.3px;width:1445px;height:43.5px;background:linear-gradient(180deg,#f9fbfd 0%,#f6f7f9 55%,#e9eaeb 100%);border-bottom-left-radius:8px"></div>
<div class="abs" style="left:983.4px;top:1060.5px;width:193.3px;height:43px;background:linear-gradient(180deg,#e1e9f6 0%,#d9e2f0 60%,#cfd7e3 100%)"></div>
<svg width="1445" height="1107"><text x="53.3" y="1051.7" font-family='"Liberation Sans", sans-serif' font-size="13.6" fill="#575757" font-weight="normal" font-style="normal" text-anchor="start" textLength="1090" lengthAdjust="spacingAndGlyphs" >Quotes are not sourced from all markets and may be delayed up to 20 minutes. Information is provided 'as is' and solely for informational purposes, not for trading purposes or advice.</text><text x="1148" y="1051.7" font-family='"Liberation Sans", sans-serif' font-size="13.6" fill="#1558d6" font-weight="normal" font-style="normal" text-anchor="start" textLength="63.2" lengthAdjust="spacingAndGlyphs" >Disclaimer</text><rect x="62.3" y="1077.3999999999999" width="17.3" height="1.8" fill="#444746"/><rect x="62.3" y="1082.3" width="17.3" height="1.8" fill="#444746"/><rect x="62.3" y="1087.1999999999998" width="17.3" height="1.8" fill="#444746"/><text x="127.1" y="1089.9" font-family='"Liberation Sans", sans-serif' font-size="17" fill="#444746" font-weight="normal" font-style="normal" text-anchor="start" textLength="136.4" lengthAdjust="spacingAndGlyphs" >Portfolio Master</text><path d="M278.4 1081.5 H287.79999999999995 L283.09999999999997 1086.4 Z" fill="#444746"/><rect x="111.2" y="1101" width="192.10000000000002" height="3.3" fill="#3c78d8"/><text x="319.5" y="1089.9" font-family='"Liberation Sans", sans-serif' font-size="17" fill="#444746" font-weight="normal" font-style="normal" text-anchor="start" textLength="83" lengthAdjust="spacingAndGlyphs" >Dividends</text><path d="M412 1081.5 H421.4 L416.7 1086.4 Z" fill="#444746"/><rect x="303.3" y="1101" width="138.5" height="3.3" fill="#cc4b4b"/><text x="457.6" y="1089.9" font-family='"Liberation Sans", sans-serif' font-size="17" fill="#444746" font-weight="normal" font-style="normal" text-anchor="start" textLength="121" lengthAdjust="spacingAndGlyphs" >USD Overview</text><path d="M592.5 1081.5 H601.9 L597.2 1086.4 Z" fill="#444746"/><rect x="441.8" y="1101" width="175.40000000000003" height="3.3" fill="#93c47d"/><text x="633.8" y="1089.9" font-family='"Liberation Sans", sans-serif' font-size="17" fill="#444746" font-weight="normal" font-style="normal" text-anchor="start" textLength="121.7" lengthAdjust="spacingAndGlyphs" >CAD Overview</text><path d="M769.7 1081.5 H779.1 L774.4000000000001 1086.4 Z" fill="#444746"/><rect x="617.2" y="1101" width="177.79999999999995" height="3.3" fill="#93c47d"/><text x="810.7" y="1089.9" font-family='"Liberation Sans", sans-serif' font-size="17" fill="#444746" font-weight="normal" font-style="normal" text-anchor="start" textLength="133.1" lengthAdjust="spacingAndGlyphs" >USD Dashboard</text><path d="M959 1081.5 H968.4 L963.7 1086.4 Z" fill="#444746"/><rect x="795" y="1101" width="188.39999999999998" height="3.3" fill="#e6c47f"/><text x="998.6" y="1089.9" font-family='"Liberation Sans", sans-serif' font-size="17" fill="#0b57d0" font-weight="bold" font-style="normal" text-anchor="start" textLength="139.1" lengthAdjust="spacingAndGlyphs" >CAD Dashboard</text><path d="M1153.9 1081.5 H1163.3000000000002 L1158.6000000000001 1086.4 Z" fill="#0b57d0"/><rect x="983.4" y="1101" width="193.30000000000007" height="3.3" fill="#e6c47f"/></svg>
</body></html>
